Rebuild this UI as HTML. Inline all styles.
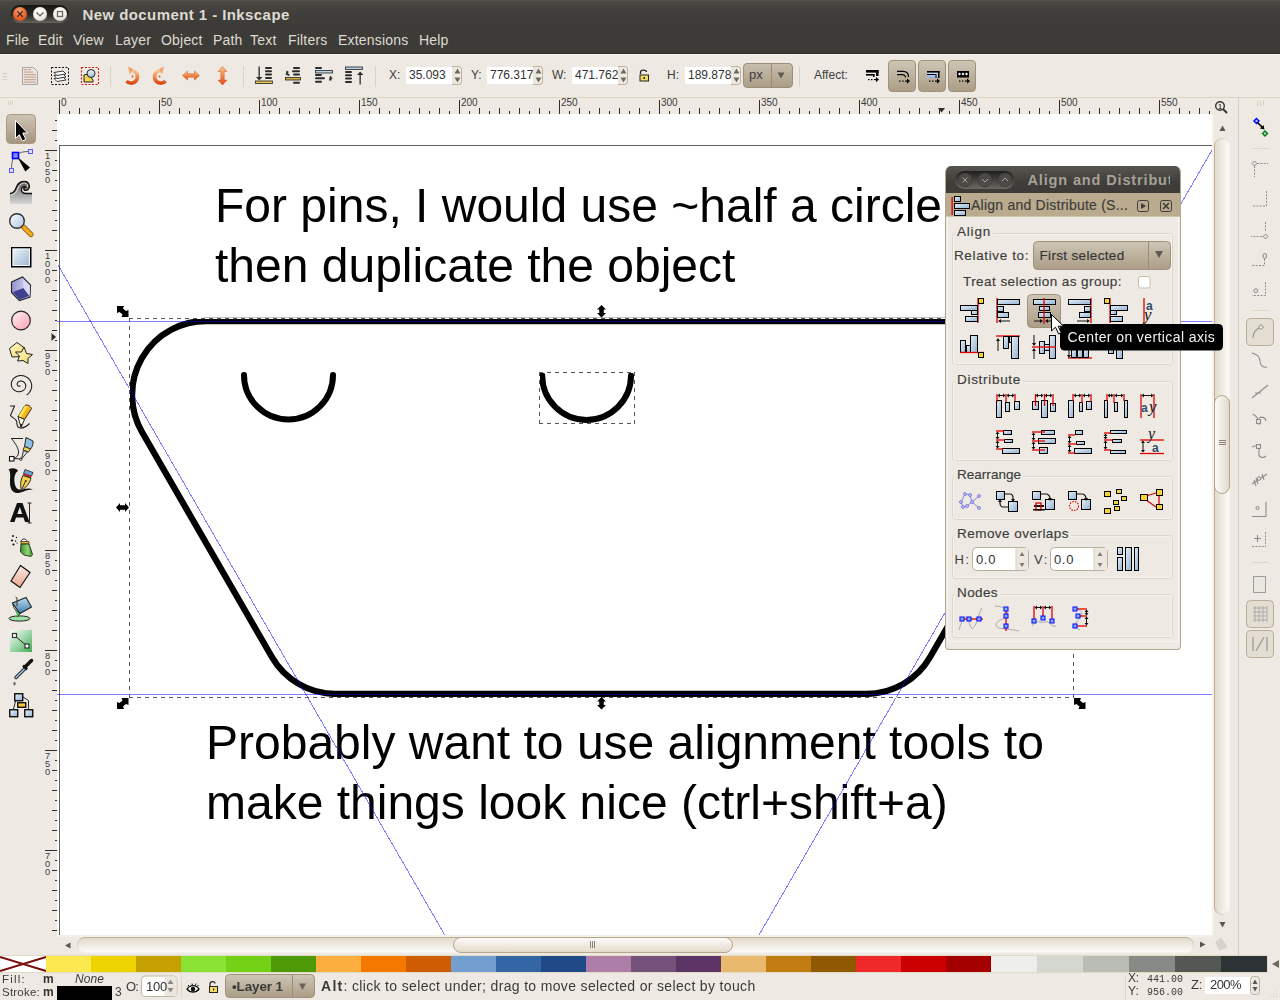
<!DOCTYPE html>
<html><head><meta charset="utf-8">
<style>
*{margin:0;padding:0;box-sizing:border-box}
html,body{width:1280px;height:1000px;overflow:hidden;background:#eeeae3;font-family:"Liberation Sans",sans-serif;position:relative}
.a{position:absolute}
svg{overflow:visible}
#title{left:0;top:0;width:1280px;height:27px;background:linear-gradient(#5e5950 0,#4a4843 1px,#3f3e3a 14px,#3c3b37 27px);}
#menu{left:0;top:27px;width:1280px;height:27px;background:#3c3b37;border-bottom:1px solid #2c2b28}
#menu span{position:absolute;top:5px;font-size:14px;color:#dfdbd2;letter-spacing:0.2px}
#tb{left:0;top:54px;width:1280px;height:43px;background:#eeeae3;border-top:1px solid #f8f6f2;}
.sep97{left:0;top:97px;width:1280px;height:1px;background:#ddd5c4}
#canvas{left:57px;top:114px;width:1155px;height:821px;background:#fff;overflow:hidden}
</style></head><body>
<div id="title" class="a"></div>
<div id="menu" class="a">
<span style="left:6px">File</span><span style="left:38px">Edit</span><span style="left:73px">View</span><span style="left:115px">Layer</span><span style="left:161px">Object</span><span style="left:213px">Path</span><span style="left:250px">Text</span><span style="left:288px">Filters</span><span style="left:338px">Extensions</span><span style="left:419px">Help</span>
</div>
<svg class="a" style="left:0;top:0" width="400" height="27" viewBox="0 0 400 27">
<defs>
<linearGradient id="tpill" x1="0" y1="0" x2="0" y2="1"><stop offset="0" stop-color="#161614"/><stop offset="0.55" stop-color="#2a2926"/><stop offset="1" stop-color="#67645d"/></linearGradient>
<radialGradient id="tred" cx="0.45" cy="0.3" r="0.7"><stop offset="0" stop-color="#f7a37a"/><stop offset="0.6" stop-color="#ec6a35"/><stop offset="1" stop-color="#d9531e"/></radialGradient>
<radialGradient id="twht" cx="0.45" cy="0.3" r="0.7"><stop offset="0" stop-color="#ffffff"/><stop offset="0.7" stop-color="#f0ede6"/><stop offset="1" stop-color="#d6d1c6"/></radialGradient>
</defs>
<rect x="10.5" y="5" width="58.5" height="18" rx="9" fill="url(#tpill)"/>
<circle cx="20" cy="14" r="7" fill="url(#tred)"/>
<circle cx="40" cy="14" r="7" fill="url(#twht)"/>
<circle cx="60" cy="14" r="7" fill="url(#twht)"/>
<path d="M17.3,11.3 L22.7,16.7 M22.7,11.3 L17.3,16.7" stroke="#4a2a1a" stroke-width="1.3"/>
<path d="M36.5,12.5 L40,15.8 L43.5,12.5" stroke="#6a6760" stroke-width="1.4" fill="none"/>
<rect x="57.5" y="11.5" width="5" height="5" fill="none" stroke="#6a6760" stroke-width="1.3"/>
<text x="82.5" y="19.5" font-family="Liberation Sans" font-weight="bold" font-size="15" fill="#dfdbd2" letter-spacing="0.42">New document 1 - Inkscape</text>
</svg>

<div id="tb" class="a"></div>
<style>
.tl{position:absolute;top:67px;font-size:12px;color:#3c3c3c;line-height:17px}
.inp{position:absolute;top:67px;height:17px;background:#fff;font-size:12px;color:#333;line-height:17px;padding-left:3px;overflow:hidden;white-space:nowrap}
.spin{position:absolute;top:66px;width:10px;height:19px;background:linear-gradient(90deg,#e9e4d9,#f3f0ea);border:1px solid #bfb39c;border-left:none;border-radius:0 4px 4px 0}
.btnp{position:absolute;top:60px;width:28px;height:32px;border-radius:4px;border:1px solid #a0927a;background:linear-gradient(#cfc6b6,#ab9d86)}
.vsep{position:absolute;top:66px;width:1px;height:21px;background:#dcd4c3}
</style>
<g></g>
<svg class="a" style="left:0;top:54px" width="1280" height="43" viewBox="0 54 1280 43">
<defs>
<linearGradient id="og" x1="0" y1="0" x2="0" y2="1"><stop offset="0" stop-color="#f7c89a"/><stop offset="0.5" stop-color="#f08a4b"/><stop offset="1" stop-color="#dc4a14"/></linearGradient>
<linearGradient id="bl" x1="0" y1="0" x2="0" y2="1"><stop offset="0" stop-color="#f3f7fb"/><stop offset="1" stop-color="#9bb8d5"/></linearGradient>
</defs>
<g fill="#d8cfbc"><rect x="3" y="73" width="4" height="1"/><rect x="3" y="76" width="4" height="1"/><rect x="3" y="79" width="4" height="1"/></g>
<!-- doc icon -->
<path d="M22.5,67.5 L33.5,67.5 L37.5,71.5 L37.5,84.5 L22.5,84.5 Z" fill="#ebe3de" stroke="#a7a7a7" stroke-width="1"/>
<g fill="#c9a795"><rect x="24" y="69" width="3" height="1.2"/><rect x="28" y="69" width="3" height="1.2"/><rect x="24" y="71.5" width="9" height="1.2"/><rect x="24" y="74" width="12" height="1.2"/><rect x="24" y="76.5" width="12" height="1.2"/><rect x="24" y="79" width="12" height="1.2"/><rect x="24" y="81.5" width="12" height="1.2"/></g>
<!-- layers dashed -->
<rect x="51.5" y="67.5" width="17" height="17" fill="none" stroke="#111" stroke-width="1" stroke-dasharray="2,1.5"/>
<g stroke="#222" stroke-width="0.9" fill="#fff"><path d="M54,78.5 L63,77 L66,80 L57,81.5 Z"/><path d="M54,75.5 L63,74 L66,77 L57,78.5 Z"/><path d="M54,72.5 L63,71 L66,74 L57,75.5 Z"/></g>
<!-- red dashed w/ magnifier -->
<rect x="81.5" y="67.5" width="17" height="17" fill="none" stroke="#e01b1b" stroke-width="1.2" stroke-dasharray="2,1.5"/>
<path d="M84,75 L88,74 L93,80 L93,82 L84,82 Z" fill="#f6d44c" stroke="#222" stroke-width="1"/>
<circle cx="91" cy="73.5" r="4" fill="url(#bl)" stroke="#222" stroke-width="1"/>
<rect x="110" y="66" width="1" height="21" fill="#dcd4c3"/>
<!-- undo -->
<g transform="translate(2,0)"><path d="M129,70.5 A6.3,6.3 0 1 1 124.5,81" fill="none" stroke="url(#og)" stroke-width="3.6"/>
<path d="M126,66.5 L131,69 L128,74.5 Z" fill="#f3a36a"/>
<circle cx="130.5" cy="76.5" r="1" fill="#e0541c"/></g>
<!-- redo -->
<g transform="translate(3,0)"><path d="M158,70.5 A6.3,6.3 0 1 0 162.5,81" fill="none" stroke="url(#og)" stroke-width="3.6"/>
<path d="M161,66.5 L156,69 L159,74.5 Z" fill="#f3a36a"/>
<circle cx="156.5" cy="76.5" r="1" fill="#e0541c"/></g>
<!-- flip h -->
<path d="M182.5,75.5 L187.5,71 L187.5,73.8 L194.5,73.8 L194.5,71 L199.5,75.5 L194.5,80 L194.5,77.2 L187.5,77.2 L187.5,80 Z" fill="url(#og)" stroke="#d5521b" stroke-width="0.5"/>
<!-- flip v -->
<path d="M222.5,66.5 L227,71.5 L224.2,71.5 L224.2,80 L227,80 L222.5,85 L218,80 L220.8,80 L220.8,71.5 L218,71.5 Z" fill="url(#og)" stroke="#d5521b" stroke-width="0.5"/>
<rect x="243" y="66" width="1" height="21" fill="#dcd4c3"/>
<!-- z-order icons -->
<g fill="#2b2b2b">
<rect x="258.5" y="66.5" width="1.3" height="12"/><path d="M256,77 L262.3,77 L259.2,80.5 Z"/>
<rect x="265" y="67" width="7" height="2" rx="1"/><rect x="265" y="70.3" width="7" height="2" rx="1"/><rect x="265" y="73.6" width="7" height="2" rx="1"/><rect x="265" y="77" width="7" height="2" rx="1"/>
</g>
<rect x="255.5" y="81" width="17" height="2.5" fill="#e6c34f" stroke="#222" stroke-width="0.8"/>
<g fill="#2b2b2b">
<rect x="293" y="67" width="7" height="2" rx="1"/><rect x="292" y="70.3" width="8" height="2" rx="1"/><rect x="293" y="73.6" width="7" height="2" rx="1"/><rect x="293" y="81.7" width="7" height="2" rx="1"/>
<path d="M286.5,70.5 L289,72 L287.5,73 L290,75 L288.5,76 L286,74.5 L285.5,75.5 Z"/>
</g>
<rect x="285.5" y="77.5" width="15" height="2.5" fill="#d2b040" stroke="#222" stroke-width="0.8"/>
<g fill="#2b2b2b">
<rect x="315" y="67" width="7" height="2" rx="1"/><rect x="315" y="74" width="7" height="2" rx="1"/><rect x="315" y="77.3" width="10" height="2" rx="1"/><rect x="315" y="80.7" width="7" height="2" rx="1"/>
<path d="M330,75.5 L333,78.5 L331.5,78.5 L331.5,80.5 L329,80.5 Z"/>
</g>
<rect x="315.5" y="70.5" width="17" height="2.5" fill="#b9cfe6" stroke="#222" stroke-width="0.8"/>
<g fill="#2b2b2b">
<rect x="345" y="71" width="7" height="2" rx="1"/><rect x="345" y="74.3" width="7" height="2" rx="1"/><rect x="345" y="77.6" width="7" height="2" rx="1"/><rect x="345" y="81" width="7" height="2" rx="1"/>
<rect x="359.5" y="73.5" width="1.3" height="11"/><path d="M357,75 L363.3,75 L360.2,71.5 Z"/>
</g>
<rect x="345.5" y="67" width="17" height="2.5" fill="#b9cfe6" stroke="#222" stroke-width="0.8"/>
<rect x="375" y="66" width="1" height="21" fill="#dcd4c3"/>
<!-- lock -->
<path d="M640.5,74 L640.5,72 C640.5,69.5 646.5,69.5 646.5,72" fill="none" stroke="#222" stroke-width="1.3"/>
<rect x="640" y="75" width="8.5" height="6" fill="#f5dc5c" stroke="#222" stroke-width="1"/>
<rect x="643.5" y="77" width="1.5" height="2" fill="#222"/>
<rect x="799" y="66" width="1" height="21" fill="#dcd4c3"/>
</svg>
<div class="tl" style="left:389px">X:</div>
<div class="inp" style="left:406px;width:47px">35.093</div><div class="spin" style="left:452px"></div>
<div class="tl" style="left:471px">Y:</div>
<div class="inp" style="left:487px;width:46px">776.317</div><div class="spin" style="left:533px"></div>
<div class="tl" style="left:552px">W:</div>
<div class="inp" style="left:572px;width:47px">471.762</div><div class="spin" style="left:618px"></div>
<div class="tl" style="left:667px">H:</div>
<div class="inp" style="left:685px;width:47px">189.878</div><div class="spin" style="left:731px"></div>
<div class="a" style="left:743px;top:63px;width:50px;height:25px;border-radius:4px;border:1px solid #9d8f77;background:linear-gradient(#c8bead,#ab9d86)"><div class="a" style="left:27px;top:0;width:1px;height:23px;background:#9a8c74"></div><div class="a" style="left:5px;top:3px;font-size:13px;color:#3c3c3c">px</div></div>
<div class="tl" style="left:814px">Affect:</div>
<div class="btnp" style="left:888px"></div><div class="btnp" style="left:918px"></div><div class="btnp" style="left:948px"></div>
<svg class="a" style="left:0;top:54px" width="1280" height="43" viewBox="0 54 1280 43">

<g fill="#6e6a62">
<path d="M454.5,73.5 L457.5,68.5 L460.5,73.5 Z M454.5,77.5 L457.5,82.5 L460.5,77.5 Z"/>
<path d="M535.5,73.5 L538.5,68.5 L541.5,73.5 Z M535.5,77.5 L538.5,82.5 L541.5,77.5 Z"/>
<path d="M620.5,73.5 L623.5,68.5 L626.5,73.5 Z M620.5,77.5 L623.5,82.5 L626.5,77.5 Z"/>
<path d="M733.5,73.5 L736.5,68.5 L739.5,73.5 Z M733.5,77.5 L736.5,82.5 L739.5,77.5 Z"/>
<path d="M777.5,72.5 L784.5,72.5 L781,78.5 Z" fill="#5f5a50"/>
</g>
<!-- affect icons -->
<g fill="#000">
<rect x="866" y="70" width="12.5" height="2.6"/><rect x="876" y="70" width="2.5" height="6"/>
<rect x="866" y="74" width="8.5" height="1.6"/><rect x="873" y="74" width="1.5" height="3"/>
<rect x="868" y="79" width="1.5" height="1.2"/><rect x="871" y="79" width="1.5" height="1.2"/><rect x="874" y="79" width="2" height="1.2"/><path d="M876,77 L879,79.6 L876,82.2 Z"/>
</g>
<g fill="none" stroke="#000" stroke-width="1.2"><path d="M897,71.3 L903,71.3 C906.5,71.3 908.5,73.5 908.5,77"/><path d="M897,74.6 L902,74.6 C904,74.6 905.5,75.5 905.5,77.5"/></g>
<g fill="#000"><rect x="899" y="80.5" width="1.5" height="1.2"/><rect x="902" y="80.5" width="1.5" height="1.2"/><rect x="905" y="80.5" width="2" height="1.2"/><path d="M907,78.5 L910,81.1 L907,83.7 Z"/></g>
<defs><linearGradient id="afb" x1="0" y1="0" x2="0" y2="1"><stop offset="0" stop-color="#dce9f6"/><stop offset="1" stop-color="#8fb3d9"/></linearGradient></defs>
<rect x="927" y="71" width="12" height="7" fill="url(#afb)"/>
<g fill="#000"><rect x="927" y="71" width="12.5" height="1.6"/><rect x="938" y="71" width="1.5" height="7"/><rect x="927" y="74" width="9" height="1"/><rect x="935.5" y="74" width="1" height="4"/></g>
<g fill="#000"><rect x="929" y="80.5" width="1.5" height="1.2"/><rect x="932" y="80.5" width="1.5" height="1.2"/><rect x="935" y="80.5" width="2" height="1.2"/><path d="M937,78.5 L940,81.1 L937,83.7 Z"/></g>
<rect x="957" y="71" width="12" height="6.5" fill="#000"/>
<g fill="#fff"><path d="M959.5,72.5 L961,74 L959.5,75.5 L958,74 Z"/><path d="M963,72.5 L964.5,74 L963,75.5 L961.5,74 Z"/><path d="M966.5,72.5 L968,74 L966.5,75.5 L965,74 Z"/></g>
<g fill="#000"><rect x="959" y="80.5" width="1.5" height="1.2"/><rect x="962" y="80.5" width="1.5" height="1.2"/><rect x="965" y="80.5" width="2" height="1.2"/><path d="M967,78.5 L970,81.1 L967,83.7 Z"/></g>
</svg>

<div class="a sep97"></div>
<svg class="a" style="left:0;top:0" width="1280" height="1000" viewBox="0 0 1280 1000"><g fill="#2e2e2e"><rect x="59" y="100" width="1" height="14"/><rect x="69" y="111" width="1" height="3"/><rect x="79" y="108" width="1" height="6"/><rect x="89" y="111" width="1" height="3"/><rect x="99" y="108" width="1" height="6"/><rect x="109" y="111" width="1" height="3"/><rect x="119" y="108" width="1" height="6"/><rect x="129" y="111" width="1" height="3"/><rect x="139" y="108" width="1" height="6"/><rect x="149" y="111" width="1" height="3"/><rect x="159" y="100" width="1" height="14"/><rect x="169" y="111" width="1" height="3"/><rect x="179" y="108" width="1" height="6"/><rect x="189" y="111" width="1" height="3"/><rect x="199" y="108" width="1" height="6"/><rect x="209" y="111" width="1" height="3"/><rect x="219" y="108" width="1" height="6"/><rect x="229" y="111" width="1" height="3"/><rect x="239" y="108" width="1" height="6"/><rect x="249" y="111" width="1" height="3"/><rect x="259" y="100" width="1" height="14"/><rect x="269" y="111" width="1" height="3"/><rect x="279" y="108" width="1" height="6"/><rect x="289" y="111" width="1" height="3"/><rect x="299" y="108" width="1" height="6"/><rect x="309" y="111" width="1" height="3"/><rect x="319" y="108" width="1" height="6"/><rect x="329" y="111" width="1" height="3"/><rect x="339" y="108" width="1" height="6"/><rect x="349" y="111" width="1" height="3"/><rect x="359" y="100" width="1" height="14"/><rect x="369" y="111" width="1" height="3"/><rect x="379" y="108" width="1" height="6"/><rect x="389" y="111" width="1" height="3"/><rect x="399" y="108" width="1" height="6"/><rect x="409" y="111" width="1" height="3"/><rect x="419" y="108" width="1" height="6"/><rect x="429" y="111" width="1" height="3"/><rect x="439" y="108" width="1" height="6"/><rect x="449" y="111" width="1" height="3"/><rect x="459" y="100" width="1" height="14"/><rect x="469" y="111" width="1" height="3"/><rect x="479" y="108" width="1" height="6"/><rect x="489" y="111" width="1" height="3"/><rect x="499" y="108" width="1" height="6"/><rect x="509" y="111" width="1" height="3"/><rect x="519" y="108" width="1" height="6"/><rect x="529" y="111" width="1" height="3"/><rect x="539" y="108" width="1" height="6"/><rect x="549" y="111" width="1" height="3"/><rect x="559" y="100" width="1" height="14"/><rect x="569" y="111" width="1" height="3"/><rect x="579" y="108" width="1" height="6"/><rect x="589" y="111" width="1" height="3"/><rect x="599" y="108" width="1" height="6"/><rect x="609" y="111" width="1" height="3"/><rect x="619" y="108" width="1" height="6"/><rect x="629" y="111" width="1" height="3"/><rect x="639" y="108" width="1" height="6"/><rect x="649" y="111" width="1" height="3"/><rect x="659" y="100" width="1" height="14"/><rect x="669" y="111" width="1" height="3"/><rect x="679" y="108" width="1" height="6"/><rect x="689" y="111" width="1" height="3"/><rect x="699" y="108" width="1" height="6"/><rect x="709" y="111" width="1" height="3"/><rect x="719" y="108" width="1" height="6"/><rect x="729" y="111" width="1" height="3"/><rect x="739" y="108" width="1" height="6"/><rect x="749" y="111" width="1" height="3"/><rect x="759" y="100" width="1" height="14"/><rect x="769" y="111" width="1" height="3"/><rect x="779" y="108" width="1" height="6"/><rect x="789" y="111" width="1" height="3"/><rect x="799" y="108" width="1" height="6"/><rect x="809" y="111" width="1" height="3"/><rect x="819" y="108" width="1" height="6"/><rect x="829" y="111" width="1" height="3"/><rect x="839" y="108" width="1" height="6"/><rect x="849" y="111" width="1" height="3"/><rect x="859" y="100" width="1" height="14"/><rect x="869" y="111" width="1" height="3"/><rect x="879" y="108" width="1" height="6"/><rect x="889" y="111" width="1" height="3"/><rect x="899" y="108" width="1" height="6"/><rect x="909" y="111" width="1" height="3"/><rect x="919" y="108" width="1" height="6"/><rect x="929" y="111" width="1" height="3"/><rect x="939" y="108" width="1" height="6"/><rect x="949" y="111" width="1" height="3"/><rect x="959" y="100" width="1" height="14"/><rect x="969" y="111" width="1" height="3"/><rect x="979" y="108" width="1" height="6"/><rect x="989" y="111" width="1" height="3"/><rect x="999" y="108" width="1" height="6"/><rect x="1009" y="111" width="1" height="3"/><rect x="1019" y="108" width="1" height="6"/><rect x="1029" y="111" width="1" height="3"/><rect x="1039" y="108" width="1" height="6"/><rect x="1049" y="111" width="1" height="3"/><rect x="1059" y="100" width="1" height="14"/><rect x="1069" y="111" width="1" height="3"/><rect x="1079" y="108" width="1" height="6"/><rect x="1089" y="111" width="1" height="3"/><rect x="1099" y="108" width="1" height="6"/><rect x="1109" y="111" width="1" height="3"/><rect x="1119" y="108" width="1" height="6"/><rect x="1129" y="111" width="1" height="3"/><rect x="1139" y="108" width="1" height="6"/><rect x="1149" y="111" width="1" height="3"/><rect x="1159" y="100" width="1" height="14"/><rect x="1169" y="111" width="1" height="3"/><rect x="1179" y="108" width="1" height="6"/><rect x="1189" y="111" width="1" height="3"/><rect x="1199" y="108" width="1" height="6"/><rect x="1209" y="111" width="1" height="3"/></g><g font-family="Liberation Sans" font-size="10" fill="#3a3a3a"><text x="61" y="106">0</text><text x="161" y="106">50</text><text x="261" y="106">100</text><text x="361" y="106">150</text><text x="461" y="106">200</text><text x="561" y="106">250</text><text x="661" y="106">300</text><text x="761" y="106">350</text><text x="861" y="106">400</text><text x="961" y="106">450</text><text x="1061" y="106">500</text><text x="1161" y="106">550</text></g><path d="M938,108 L945,108 L941.5,112.5 Z" fill="#2e2e2e"/></svg>
<svg class="a" style="left:0;top:0" width="1280" height="1000" viewBox="0 0 1280 1000"><g fill="#2e2e2e"><rect x="55" y="120" width="2" height="1"/><rect x="52" y="130" width="5" height="1"/><rect x="55" y="140" width="2" height="1"/><rect x="45" y="150" width="12" height="1"/><rect x="55" y="160" width="2" height="1"/><rect x="52" y="170" width="5" height="1"/><rect x="55" y="180" width="2" height="1"/><rect x="52" y="190" width="5" height="1"/><rect x="55" y="200" width="2" height="1"/><rect x="52" y="210" width="5" height="1"/><rect x="55" y="220" width="2" height="1"/><rect x="52" y="230" width="5" height="1"/><rect x="55" y="240" width="2" height="1"/><rect x="45" y="250" width="12" height="1"/><rect x="55" y="260" width="2" height="1"/><rect x="52" y="270" width="5" height="1"/><rect x="55" y="280" width="2" height="1"/><rect x="52" y="290" width="5" height="1"/><rect x="55" y="300" width="2" height="1"/><rect x="52" y="310" width="5" height="1"/><rect x="55" y="320" width="2" height="1"/><rect x="52" y="330" width="5" height="1"/><rect x="55" y="340" width="2" height="1"/><rect x="45" y="350" width="12" height="1"/><rect x="55" y="360" width="2" height="1"/><rect x="52" y="370" width="5" height="1"/><rect x="55" y="380" width="2" height="1"/><rect x="52" y="390" width="5" height="1"/><rect x="55" y="400" width="2" height="1"/><rect x="52" y="410" width="5" height="1"/><rect x="55" y="420" width="2" height="1"/><rect x="52" y="430" width="5" height="1"/><rect x="55" y="440" width="2" height="1"/><rect x="45" y="450" width="12" height="1"/><rect x="55" y="460" width="2" height="1"/><rect x="52" y="470" width="5" height="1"/><rect x="55" y="480" width="2" height="1"/><rect x="52" y="490" width="5" height="1"/><rect x="55" y="500" width="2" height="1"/><rect x="52" y="510" width="5" height="1"/><rect x="55" y="520" width="2" height="1"/><rect x="52" y="530" width="5" height="1"/><rect x="55" y="540" width="2" height="1"/><rect x="45" y="550" width="12" height="1"/><rect x="55" y="560" width="2" height="1"/><rect x="52" y="570" width="5" height="1"/><rect x="55" y="580" width="2" height="1"/><rect x="52" y="590" width="5" height="1"/><rect x="55" y="600" width="2" height="1"/><rect x="52" y="610" width="5" height="1"/><rect x="55" y="620" width="2" height="1"/><rect x="52" y="630" width="5" height="1"/><rect x="55" y="640" width="2" height="1"/><rect x="45" y="650" width="12" height="1"/><rect x="55" y="660" width="2" height="1"/><rect x="52" y="670" width="5" height="1"/><rect x="55" y="680" width="2" height="1"/><rect x="52" y="690" width="5" height="1"/><rect x="55" y="700" width="2" height="1"/><rect x="52" y="710" width="5" height="1"/><rect x="55" y="720" width="2" height="1"/><rect x="52" y="730" width="5" height="1"/><rect x="55" y="740" width="2" height="1"/><rect x="45" y="750" width="12" height="1"/><rect x="55" y="760" width="2" height="1"/><rect x="52" y="770" width="5" height="1"/><rect x="55" y="780" width="2" height="1"/><rect x="52" y="790" width="5" height="1"/><rect x="55" y="800" width="2" height="1"/><rect x="52" y="810" width="5" height="1"/><rect x="55" y="820" width="2" height="1"/><rect x="52" y="830" width="5" height="1"/><rect x="55" y="840" width="2" height="1"/><rect x="45" y="850" width="12" height="1"/><rect x="55" y="860" width="2" height="1"/><rect x="52" y="870" width="5" height="1"/><rect x="55" y="880" width="2" height="1"/><rect x="52" y="890" width="5" height="1"/><rect x="55" y="900" width="2" height="1"/><rect x="52" y="910" width="5" height="1"/><rect x="55" y="920" width="2" height="1"/><rect x="52" y="930" width="5" height="1"/></g><g font-family="Liberation Sans" font-size="9.3" fill="#3a3a3a"><text x="45" y="159">1</text><text x="45" y="167">0</text><text x="45" y="175">5</text><text x="45" y="183">0</text><text x="45" y="259">1</text><text x="45" y="267">0</text><text x="45" y="275">0</text><text x="45" y="283">0</text><text x="45" y="359">9</text><text x="45" y="367">5</text><text x="45" y="375">0</text><text x="45" y="459">9</text><text x="45" y="467">0</text><text x="45" y="475">0</text><text x="45" y="559">8</text><text x="45" y="567">5</text><text x="45" y="575">0</text><text x="45" y="659">8</text><text x="45" y="667">0</text><text x="45" y="675">0</text><text x="45" y="759">7</text><text x="45" y="767">5</text><text x="45" y="775">0</text><text x="45" y="859">7</text><text x="45" y="867">0</text><text x="45" y="875">0</text></g><path d="M51.5,333 L56,337 L51.5,341 Z" fill="#2e2e2e"/></svg>
<svg class="a" style="left:0;top:0" width="40" height="730" viewBox="0 0 40 730">
<defs>
<linearGradient id="selbg" x1="0" y1="0" x2="0" y2="1"><stop offset="0" stop-color="#cfc5b4"/><stop offset="1" stop-color="#a49580"/></linearGradient>
<linearGradient id="gray1" x1="0" y1="0" x2="0" y2="1"><stop offset="0" stop-color="#5e5e5e"/><stop offset="1" stop-color="#d8d8d8"/></linearGradient>
<linearGradient id="blue1" x1="0" y1="0" x2="1" y2="1"><stop offset="0" stop-color="#f4f7fb"/><stop offset="1" stop-color="#98b5d0"/></linearGradient>
<linearGradient id="lens" x1="0" y1="0" x2="1" y2="1"><stop offset="0" stop-color="#ffffff"/><stop offset="1" stop-color="#a9c3e0"/></linearGradient>
<linearGradient id="pink" x1="0" y1="0" x2="1" y2="1"><stop offset="0" stop-color="#fff5f6"/><stop offset="1" stop-color="#fb9fae"/></linearGradient>
<linearGradient id="yel" x1="0" y1="0" x2="1" y2="1"><stop offset="0" stop-color="#fffbd8"/><stop offset="1" stop-color="#f3d760"/></linearGradient>
<linearGradient id="purp" x1="0" y1="0" x2="1" y2="0"><stop offset="0" stop-color="#8e8ecc"/><stop offset="1" stop-color="#e4e4fa"/></linearGradient>
<linearGradient id="green1" x1="0" y1="0" x2="1" y2="1"><stop offset="0" stop-color="#ffffff"/><stop offset="1" stop-color="#3fae55"/></linearGradient>
<linearGradient id="grn2" x1="0" y1="0" x2="1" y2="0"><stop offset="0" stop-color="#3c8f2c"/><stop offset="0.6" stop-color="#8fd66b"/><stop offset="1" stop-color="#3f8f2f"/></linearGradient>
<linearGradient id="bucket" x1="0" y1="0" x2="0" y2="1"><stop offset="0" stop-color="#bde0ee"/><stop offset="1" stop-color="#3f79b0"/></linearGradient>
<linearGradient id="eras" x1="0" y1="0" x2="0" y2="1"><stop offset="0" stop-color="#fbefe9"/><stop offset="1" stop-color="#eca58c"/></linearGradient>
<linearGradient id="boxb" x1="0" y1="0" x2="1" y2="1"><stop offset="0" stop-color="#e8f0f8"/><stop offset="1" stop-color="#94b2d0"/></linearGradient>
</defs>
<!-- handle -->
<g fill="#d9d0bd"><rect x="8" y="101" width="1" height="4"/><rect x="10" y="101" width="1" height="4"/><rect x="12" y="101" width="1" height="4"/></g>
<!-- select -->
<rect x="6.5" y="114.5" width="29" height="29" rx="4" fill="url(#selbg)" stroke="#a8997f" stroke-width="1"/>
<path d="M15.5,120.5 L27.5,133 L22.8,133 L25.8,139.3 L22.3,141 L19.3,134.7 L15.5,138.3 Z" fill="#000" stroke="#fff" stroke-width="1" stroke-linejoin="round"/>
<!-- node -->
<path d="M11.5,168.5 C11.5,162 13,157 16,155 C19,152.5 23,151.5 29,151.5" fill="none" stroke="#555" stroke-width="0.9"/>
<rect x="12.5" y="152.5" width="6" height="6" fill="#8a8af0" stroke="#0000ff" stroke-width="1.6"/>
<rect x="28.5" y="149.5" width="4" height="4" fill="#ddddff" stroke="#5a5aff" stroke-width="1"/>
<rect x="9.5" y="168.5" width="4" height="4" fill="#ddddff" stroke="#5a5aff" stroke-width="1"/>
<path d="M17.5,157 L30,167.5 L25.3,171.5 Z" fill="#000"/>
<!-- tweak -->
<path d="M10,193.5 C14,193.5 15.5,190 16.5,187 C18,183 21,181.5 24.5,181.5 C28.5,181.5 30,185 29,188 C28,190.5 25,191 24,189.5 C23.5,188.5 24,187 25.5,187 C24.5,186 22,186.5 21.5,189 C21,191.5 23,193.5 26,193.5 L32,193.5 L32,204 L10,204 Z" fill="url(#gray1)"/>
<path d="M10,193.5 C14,193.5 15.5,190 16.5,187 C18,183 21,181.5 24.5,181.5 C28.5,181.5 30,185 29,188 C28,190.5 25,191 24,189.5 C23.5,188.5 24,187 25.5,187 C24.5,186 22,186.5 21.5,189 C21,191.5 23,193.5 26,193.5 L32,193.5" fill="none" stroke="#111" stroke-width="1.4"/>
<path d="M11,195 C15,195 17,191 18,188 C19.5,184.5 21.5,183 24.5,183 C27,183 28,185 27.5,187" fill="none" stroke="#fff" stroke-width="0.8"/>
<!-- zoom -->
<path d="M23.5,227 L31,234.5" stroke="#7a5200" stroke-width="5.2" stroke-linecap="round"/>
<path d="M23.5,227 L31,234.5" stroke="#f7a91a" stroke-width="3.6" stroke-linecap="round"/>
<circle cx="17" cy="221" r="7.3" fill="url(#lens)" stroke="#2e3436" stroke-width="1.4"/>
<!-- rect -->
<rect x="11.75" y="247.75" width="19" height="19" fill="url(#blue1)" stroke="#000" stroke-width="1.5"/>
<rect x="13" y="249" width="16.5" height="16.5" fill="none" stroke="#fff" stroke-width="0.8"/>
<!-- 3d box -->
<path d="M11.5,282 L22.5,277 L30.5,285 L30,297 L19.5,300.5 L11.5,292.5 Z" fill="url(#purp)" stroke="#222" stroke-width="1.1"/>
<path d="M13,292 L23.5,288 L29.5,296 L19.5,299.5 Z" fill="#3e3e8e"/>
<path d="M23.5,288 L23,278.5 L30,285.5 L29.5,296 Z" fill="#d8d8f6"/>
<!-- circle -->
<circle cx="21" cy="320.5" r="9.3" fill="url(#pink)" stroke="#222" stroke-width="1.2"/>
<!-- star -->
<path d="M9.5,348.5 L17,342.5 L24,347.5 L21.5,356.5 L12,357 Z" fill="url(#yel)" stroke="#222" stroke-width="1"/>
<path d="M24,347 L26.5,353.5 L32.5,354.5 L28,358.5 L28,363.5 L23,360.5 L17.5,361 L19.5,356 L15.5,352 L21.5,352 Z" fill="url(#yel)" stroke="#222" stroke-width="1"/>
<!-- spiral -->
<path d="M20.29,385.66 L20.27,385.71 L20.24,385.77 L20.21,385.83 L20.17,385.88 L20.13,385.93 L20.08,385.98 L20.03,386.03 L19.97,386.08 L19.91,386.12 L19.84,386.16 L19.76,386.20 L19.69,386.23 L19.61,386.25 L19.52,386.28 L19.43,386.29 L19.34,386.31 L19.24,386.31 L19.15,386.32 L19.05,386.31 L18.95,386.30 L18.84,386.28 L18.74,386.26 L18.64,386.23 L18.53,386.19 L18.43,386.15 L18.33,386.10 L18.23,386.04 L18.13,385.98 L18.03,385.91 L17.94,385.83 L17.85,385.74 L17.77,385.65 L17.68,385.56 L17.61,385.45 L17.54,385.35 L17.47,385.23 L17.41,385.11 L17.36,384.99 L17.32,384.86 L17.28,384.73 L17.25,384.59 L17.23,384.45 L17.21,384.30 L17.21,384.16 L17.21,384.01 L17.23,383.86 L17.25,383.70 L17.28,383.55 L17.33,383.40 L17.38,383.24 L17.44,383.09 L17.52,382.94 L17.60,382.79 L17.69,382.65 L17.79,382.50 L17.90,382.36 L18.03,382.23 L18.16,382.10 L18.30,381.97 L18.45,381.85 L18.61,381.74 L18.77,381.63 L18.95,381.54 L19.13,381.44 L19.32,381.36 L19.52,381.29 L19.72,381.23 L19.93,381.17 L20.15,381.13 L20.37,381.09 L20.59,381.07 L20.81,381.06 L21.04,381.06 L21.28,381.07 L21.51,381.09 L21.74,381.13 L21.98,381.18 L22.21,381.24 L22.44,381.31 L22.67,381.39 L22.90,381.49 L23.12,381.60 L23.34,381.72 L23.55,381.85 L23.76,382.00 L23.96,382.15 L24.15,382.32 L24.34,382.50 L24.52,382.69 L24.68,382.89 L24.84,383.10 L24.98,383.32 L25.12,383.55 L25.24,383.78 L25.35,384.03 L25.44,384.28 L25.53,384.54 L25.59,384.80 L25.65,385.07 L25.68,385.35 L25.71,385.62 L25.71,385.90 L25.70,386.19 L25.68,386.47 L25.63,386.76 L25.57,387.04 L25.50,387.33 L25.41,387.61 L25.30,387.89 L25.17,388.16 L25.03,388.43 L24.87,388.70 L24.69,388.96 L24.50,389.21 L24.30,389.46 L24.07,389.69 L23.84,389.92 L23.59,390.13 L23.32,390.34 L23.04,390.53 L22.75,390.71 L22.45,390.88 L22.13,391.03 L21.81,391.17 L21.47,391.30 L21.13,391.40 L20.78,391.49 L20.42,391.57 L20.06,391.63 L19.69,391.67 L19.31,391.69 L18.93,391.69 L18.55,391.68 L18.17,391.64 L17.79,391.59 L17.41,391.52 L17.03,391.43 L16.66,391.32 L16.29,391.19 L15.93,391.04 L15.57,390.88 L15.22,390.69 L14.87,390.49 L14.54,390.27 L14.22,390.03 L13.91,389.78 L13.62,389.50 L13.33,389.22 L13.07,388.92 L12.81,388.60 L12.58,388.27 L12.36,387.93 L12.16,387.57 L11.98,387.20 L11.82,386.83 L11.69,386.44 L11.57,386.05 L11.47,385.64 L11.40,385.23 L11.35,384.82 L11.32,384.40 L11.32,383.98 L11.34,383.56 L11.38,383.13 L11.45,382.71 L11.54,382.29 L11.65,381.87 L11.80,381.45 L11.96,381.04 L12.15,380.64 L12.36,380.24 L12.59,379.85 L12.85,379.47 L13.13,379.11 L13.43,378.75 L13.76,378.41 L14.10,378.08 L14.46,377.77 L14.85,377.48 L15.25,377.20 L15.66,376.94 L16.10,376.70 L16.55,376.48 L17.01,376.28 L17.48,376.11 L17.97,375.95 L18.47,375.82 L18.97,375.72 L19.49,375.63 L20.01,375.58 L20.53,375.54 L21.06,375.54 L21.60,375.55 L22.13,375.60 L22.66,375.67 L23.19,375.76 L23.71,375.89 L24.24,376.04 L24.75,376.21 L25.26,376.41 L25.75,376.63 L26.24,376.88 L26.71,377.16 L27.17,377.46 L27.61,377.78 L28.04,378.12 L28.45,378.49 L28.84,378.88 L29.21,379.28 L29.55,379.71 L29.88,380.15 L30.18,380.61 L30.46,381.09 L30.71,381.58 L30.93,382.09 L31.12,382.61 L31.29,383.14 L31.43,383.68 L31.53,384.22 L31.61,384.78 L31.66,385.34 L31.67,385.90 L31.66,386.46 L31.61,387.03 L31.53,387.60 L31.41,388.16 L31.27,388.72 L31.09,389.27 L30.89,389.82 L30.65,390.36 L30.38,390.88 L30.08,391.40 L29.75,391.90 L29.39,392.39 L29.00,392.87 L28.59,393.32 L28.15,393.76 L27.68,394.17 L27.19,394.57 L26.68,394.94" fill="none" stroke="#222" stroke-width="1.1"/>
<!-- pencil -->
<path d="M10,406 L14.5,406 L10.5,415.5 C12,418 15.5,418 16.5,421 C17.5,424 16,427.5 20,428 C24,428.5 27,426 29.5,423.5" fill="none" stroke="#222" stroke-width="1.1"/>
<path d="M25,405.5 C27,404 30.5,406 31.5,408.5 L24.5,419.5 L18,416.5 Z" fill="#f8b418" stroke="#222" stroke-width="1"/>
<path d="M25,405.5 L18,416.5 L20.5,418 L27.5,406.5 Z" fill="#ffe45a"/>
<path d="M18,416.5 L24.5,419.5 L21,427.5 Z" fill="#fff8e0" stroke="#222" stroke-width="1"/>
<path d="M20.2,423.5 L22.3,424.5 L21,427.5 Z" fill="#111"/>
<!-- pen -->
<path d="M11,438.5 L23,438.5 M11.5,438.5 C15,443 18.5,448 18.5,452 C18.5,455.5 17,457.5 13.5,458.5 M14,458.5 L20,459" fill="none" stroke="#222" stroke-width="1"/>
<rect x="9.5" y="456.5" width="4.5" height="4.5" fill="#fff" stroke="#111" stroke-width="1.1"/>
<circle cx="20.8" cy="459.2" r="1.2" fill="#fff" stroke="#111" stroke-width="0.9"/>
<path d="M26,437.5 L33,441 C33.5,444 32,447.5 30.5,449 L24.5,446.5 Z" fill="#8fc0e0" stroke="#222" stroke-width="1"/>
<path d="M24.5,446.5 L30.5,449 L28.5,452 L23,450 Z" fill="#f4d25a" stroke="#222" stroke-width="0.9"/>
<path d="M23.5,450.5 L27.5,452 L21.5,459 Z" fill="#ddd" stroke="#222" stroke-width="0.9"/>
<!-- calligraphy -->
<path d="M8.5,469.5 C12,467.5 17,468 18,471 C15,473 14,477 14.5,482 C15,487 17,489.5 20,489.5 C24,489.5 28,487 33,489.5 C27,489 23,492.5 18,493 C12,493.5 10,488 10,482 C10,477 11,472 8.5,469.5 Z" fill="#111"/>
<path d="M25,469.5 L33,472.5 L31.5,476 L23.5,473.5 Z" fill="#6aa3d4" stroke="#222" stroke-width="0.8"/>
<path d="M23.5,473.5 L31.5,476 L31,478 L23,475.5 Z" fill="#d42020"/>
<path d="M23,475.5 L31,478 C30,482 28,486 21.5,490.5 C20,485 20.5,480 23,475.5 Z" fill="#f5d04a" stroke="#222" stroke-width="1"/>
<path d="M25.5,481 L22,489" stroke="#222" stroke-width="0.9"/>
<circle cx="25.8" cy="481" r="0.9" fill="#222"/>
<!-- text -->
<path d="M10,522 L17,503 L22.5,503 L29.5,522 L25,522 L23.5,517.5 L16,517.5 L14.5,522 Z M17.3,514 L22.2,514 L19.8,507 Z" fill="#111"/>
<path d="M27.5,503 L31.5,503 M29.5,503 L29.5,523 M27.5,523 L31.5,523" stroke="#111" stroke-width="0.9" fill="none"/>
<!-- spray -->
<g fill="#111"><circle cx="13" cy="536" r="1"/><circle cx="12" cy="540.5" r="1.1"/><circle cx="13.5" cy="544.5" r="1.1"/><circle cx="16.5" cy="537.5" r="0.7"/><circle cx="15.5" cy="541" r="0.7"/><circle cx="17" cy="543" r="0.6"/></g>
<path d="M21,542 C21,538 27,538 27,542 Z" fill="#fff" stroke="#222" stroke-width="0.9"/>
<rect x="21" y="541.5" width="8" height="2.5" fill="#f2b52d" stroke="#222" stroke-width="0.6"/>
<path d="M21,544 L29,544 L32.5,554.5 L31,556.5 L24,555 L20.5,552 Z" fill="url(#grn2)" stroke="#222" stroke-width="0.9"/>
<!-- eraser -->
<path d="M20.5,565.5 L30,572.5 L20,587.5 L11,581 Z" fill="url(#eras)" stroke="#111" stroke-width="1.2"/>
<!-- bucket -->
<ellipse cx="19.5" cy="618.5" rx="10.5" ry="2.6" fill="#9fe0a5" stroke="#222" stroke-width="1"/>
<path d="M12.5,603 L26,597.5 L31.5,607 L20,613.5 Z" fill="url(#bucket)" stroke="#222" stroke-width="1.1"/>
<path d="M12.5,603 C13,607 15.5,611 20,613.5 L17.5,617" fill="#55c06a" stroke="#222" stroke-width="0.9"/>
<path d="M17,606 L17,598 L15.5,597" fill="none" stroke="#333" stroke-width="1"/>
<!-- gradient -->
<rect x="10" y="630" width="22" height="22" fill="url(#green1)"/>
<path d="M14.5,635.5 L27,646" stroke="#222" stroke-width="1"/>
<rect x="12.5" y="633.5" width="4" height="4" fill="#fff" stroke="#333" stroke-width="1.2"/>
<rect x="25" y="644" width="4" height="4" fill="#fff" stroke="#333" stroke-width="1.2"/>
<!-- dropper -->
<path d="M16,677.5 L25.5,668" stroke="#222" stroke-width="3.4" stroke-linecap="round"/>
<path d="M16,677.5 L25.5,668" stroke="#9ec2e4" stroke-width="1.6" stroke-linecap="round"/>
<path d="M23.5,666 L30,659.5 C32,657.5 34.5,660 32.5,662 L26,668.5 Z" fill="#111"/>
<path d="M23,665.5 L27,669.5" stroke="#111" stroke-width="2.5"/>
<path d="M14.5,682 C13.5,683.5 13.5,685 14.5,685 C15.5,685 15.5,683.5 14.5,682 Z" fill="#8fb8e0" stroke="#333" stroke-width="0.7"/>
<!-- connector -->
<path d="M23,697 L28.5,700.5 L28.5,709.5 M15.5,701 L13.5,709" fill="none" stroke="#111" stroke-width="0.9"/>
<rect x="14.75" y="693.75" width="8" height="7" fill="url(#boxb)" stroke="#000" stroke-width="1.3"/>
<rect x="17.75" y="702.75" width="8" height="4.5" fill="#f8c93a" stroke="#000" stroke-width="1.3"/>
<rect x="9.75" y="709.75" width="8" height="7" fill="url(#boxb)" stroke="#000" stroke-width="1.3"/>
<rect x="24.75" y="709.75" width="8" height="7" fill="url(#boxb)" stroke="#000" stroke-width="1.3"/>
</svg>

<div id="canvas" class="a">
<svg width="1155" height="821" viewBox="57 114 1155 821" style="position:absolute;left:0;top:0">
<rect x="59.5" y="145.5" width="1300" height="1000" fill="none" stroke="#616161" stroke-width="1"/>
<g font-family="Liberation Sans" font-size="48" fill="#000" style="will-change:transform;opacity:0.999">
<text x="215" y="222">For pins, I would use ~half a circle</text>
<text x="215" y="282">then duplicate the object</text>
<text x="206" y="759">Probably want to use alignment tools to</text>
<text x="206" y="819">make things look nice (ctrl+shift+a)</text>
</g>
<path d="M206,321 L996,321 A74,74 0 0 1 1060,432 L930.4,656.5 A74,74 0 0 1 866.3,694 L335.7,694 A74,74 0 0 1 271.6,656.5 L142,432 A74,74 0 0 1 206,321 Z" fill="none" stroke="#000" stroke-width="6.3"/>
<path d="M244,375 A44.5,44.5 0 0 0 333,375" fill="none" stroke="#000" stroke-width="6" stroke-linecap="round"/>
<path d="M542.2,375.5 A44.4,44.4 0 0 0 631,375.5" fill="none" stroke="#000" stroke-width="6" stroke-linecap="round"/>
<g stroke="rgba(0,0,255,0.5)" stroke-width="1" fill="none" shape-rendering="crispEdges">
<line x1="57" y1="321.5" x2="1212" y2="321.5"/>
<line x1="57" y1="694.5" x2="1212" y2="694.5"/>
<line x1="58" y1="265" x2="444.8" y2="935"/>
<line x1="1212" y1="150" x2="759" y2="935"/>
</g>
<g fill="none" stroke-width="1" shape-rendering="crispEdges"><line x1="129" y1="318.5" x2="1074" y2="318.5" stroke="#fff"/><line x1="129" y1="318.5" x2="1074" y2="318.5" stroke="#575757" stroke-dasharray="4,4"/><line x1="129.5" y1="318" x2="129.5" y2="698" stroke="#fff"/><line x1="129.5" y1="318" x2="129.5" y2="698" stroke="#575757" stroke-dasharray="4,4"/><line x1="129" y1="697.5" x2="1074" y2="697.5" stroke="#fff"/><line x1="129" y1="697.5" x2="1074" y2="697.5" stroke="#575757" stroke-dasharray="4,4"/><line x1="1073.5" y1="318" x2="1073.5" y2="698" stroke="#fff"/><line x1="1073.5" y1="318" x2="1073.5" y2="698" stroke="#575757" stroke-dasharray="4,4"/><line x1="539" y1="372.5" x2="635" y2="372.5" stroke="#fff"/><line x1="539" y1="372.5" x2="635" y2="372.5" stroke="#575757" stroke-dasharray="4,4"/><line x1="539.5" y1="372" x2="539.5" y2="424" stroke="#fff"/><line x1="539.5" y1="372" x2="539.5" y2="424" stroke="#575757" stroke-dasharray="4,4"/><line x1="539" y1="423.5" x2="635" y2="423.5" stroke="#fff"/><line x1="539" y1="423.5" x2="635" y2="423.5" stroke="#575757" stroke-dasharray="4,4"/><line x1="634.5" y1="372" x2="634.5" y2="424" stroke="#fff"/><line x1="634.5" y1="372" x2="634.5" y2="424" stroke="#575757" stroke-dasharray="4,4"/></g>
<g fill="#000">
<path d="M117,306 L124,306 L123,308.5 L126,311 L128.5,310 L128.5,317 L121.5,317 L122.5,314.5 L119.5,312 L117,313 Z"/>
<path d="M117,306 L124,306 L123,308.5 L126,311 L128.5,310 L128.5,317 L121.5,317 L122.5,314.5 L119.5,312 L117,313 Z" transform="translate(0,1015) scale(1,-1)"/>
<path d="M117,306 L124,306 L123,308.5 L126,311 L128.5,310 L128.5,317 L121.5,317 L122.5,314.5 L119.5,312 L117,313 Z" transform="translate(957,392)"/>
<path d="M116,507.5 L120,503 L120,505.2 L125,505.2 L125,503 L129,507.5 L125,512 L125,509.8 L120,509.8 L120,512 Z"/>
<path d="M601.5,305 L606,309.5 L603.8,309.5 L603.8,313 L606,313 L601.5,317.5 L597,313 L599.2,313 L599.2,309.5 L597,309.5 Z"/>
<path d="M601.5,305 L606,309.5 L603.8,309.5 L603.8,313 L606,313 L601.5,317.5 L597,313 L599.2,313 L599.2,309.5 L597,309.5 Z" transform="translate(0,392)"/>
</g>
</svg>

</div>

<svg class="a" style="left:1239px;top:97px" width="41" height="858" viewBox="1239 97 41 858">
<g fill="#d9d0bd"><rect x="1257" y="101" width="1" height="5"/><rect x="1260" y="101" width="1" height="5"/><rect x="1263" y="101" width="1" height="5"/></g>
<!-- snap master -->
<path d="M1254,121 L1256.5,118.5 L1259,121 L1256.5,123.5 Z" fill="#c0c0ff" stroke="#0000ff" stroke-width="1.4"/>
<path d="M1257.5,122.5 L1263,128" stroke="#000" stroke-width="1.6"/><path d="M1264.5,129.5 L1260,128.5 L1263.5,125 Z" fill="#000"/>
<path d="M1262.5,133.5 L1265,131 L1267.5,133.5 L1265,136 Z" fill="#c0c0ff" stroke="#008000" stroke-width="1.4"/>
<g fill="#e0d6c2"><rect x="1252" y="148" width="17" height="1"/><rect x="1252" y="310" width="17" height="1"/><rect x="1252" y="562" width="17" height="1"/></g>
<g stroke="#8d8d8d" stroke-width="1" fill="none" stroke-dasharray="2,1.3">
<path d="M1257,163.5 L1268,163.5 M1254.5,166 L1254.5,177"/>
<path d="M1266.5,191 L1266.5,206 L1252,206"/>
<path d="M1265.5,222 L1265.5,232 M1262,236.5 L1251,236.5"/>
<path d="M1264.5,259 L1264.5,265.5 L1251,265.5"/>
<path d="M1265.5,282 L1265.5,295.5 L1252,295.5"/>
<path d="M1252,546.5 L1266,546.5 M1265.5,532 L1265.5,546"/>
</g>
<g stroke="#8d8d8d" stroke-width="1" fill="#e6e2da">
<path d="M1252,163.5 L1254.5,161 L1257,163.5 L1254.5,166 Z"/>
<path d="M1263,236.5 L1265.5,234 L1268,236.5 L1265.5,239 Z"/>
<ellipse cx="1264.8" cy="256" rx="1.8" ry="2.6"/>
<circle cx="1255.8" cy="290.7" r="2"/>
</g>
<!-- pressed button -->
<rect x="1246.5" y="318.5" width="27" height="27" rx="4" fill="#e3ddd2" stroke="#b9ad98"/>
<path d="M1253,338 C1253,333 1256,329 1261,327" fill="none" stroke="#8d8d8d" stroke-width="1.1"/>
<path d="M1258.5,327 L1261,324.5 L1263.5,327 L1261,329.5 Z" fill="#e6e2da" stroke="#8d8d8d"/>
<g stroke="#8d8d8d" stroke-width="1.1" fill="none">
<path d="M1252,353 C1256,354 1260,356 1260,361 C1260,366 1264,368 1267,367"/>
<path d="M1252,398 L1268,385 M1255,393 L1261,393"/>
<path d="M1253,414 C1256,416 1260,419 1259,425 M1259,418 C1262,416 1266,418 1266,421"/>
<path d="M1252,447 C1256,445 1260,446 1259,452 C1258,457 1262,459 1266,456"/>
<path d="M1252,484 L1267,474 M1254,480 L1256,486 M1256,478 L1258,484 M1262,474 L1264,480"/>
<path d="M1252,516.5 L1266,516.5 L1266,502"/>
</g>
<g fill="#e6e2da" stroke="#8d8d8d">
<rect x="1256.5" y="419.5" width="4" height="4"/>
<rect x="1256.5" y="444.5" width="4" height="4"/>
<circle cx="1259" cy="478.5" r="1.8"/>
<circle cx="1257.5" cy="508" r="1.6"/>
</g>
<path d="M1254,538.5 L1261,538.5 M1257.5,535 L1257.5,542" stroke="#8d8d8d" stroke-width="1.1"/>
<!-- page -->
<rect x="1253.5" y="576.5" width="12" height="16" fill="#eae7e1" stroke="#9d9d9d"/>
<!-- pressed grid -->
<rect x="1246.5" y="600.5" width="27" height="27" rx="4" fill="#e3ddd2" stroke="#b9ad98"/>
<g stroke="#a8a8a8" stroke-width="0.9"><path d="M1253,608 L1267,608 M1253,612 L1267,612 M1253,616 L1267,616 M1253,620 L1267,620 M1255,606 L1255,622 M1259,606 L1259,622 M1263,606 L1263,622 M1267,606 L1267,622"/></g>
<rect x="1246.5" y="630.5" width="27" height="27" rx="4" fill="#e3ddd2" stroke="#b9ad98"/>
<g stroke="#9a9a9a" stroke-width="1.3"><path d="M1253,637 L1253,651 M1267,637 L1267,651 M1256,651 L1264,637"/></g>
</svg>

<div class="a" style="left:945px;top:166px;width:236px;height:484px;border-radius:6px 6px 4px 4px;background:#eeeae3;border:1px solid #b3a68e;border-top:none;overflow:hidden">
<div class="a" style="left:-1px;top:0;width:236px;height:27px;background:linear-gradient(#57554f,#3f3e3a 60%,#3c3b37)"></div>
<div class="a" style="left:0;top:27px;width:234px;height:24px;background:#baab8e;border-bottom:1px solid #cfc4ae"></div>
<div class="a" style="left:1px;top:51px;width:232px;height:425px;border:1px solid #f7f5f1;border-top:none"></div>
</div>
<svg class="a" style="left:0;top:0" width="1280" height="1000" viewBox="0 0 1280 1000">
<defs>
<linearGradient id="bx" x1="0" y1="0" x2="1" y2="1"><stop offset="0" stop-color="#e6eff8"/><stop offset="1" stop-color="#93b2d1"/></linearGradient>
<linearGradient id="pill" x1="0" y1="0" x2="0" y2="1"><stop offset="0" stop-color="#1e1e1c"/><stop offset="1" stop-color="#6a6862"/></linearGradient>
<linearGradient id="btng" x1="0" y1="0" x2="0" y2="1"><stop offset="0" stop-color="#cfc6b6"/><stop offset="1" stop-color="#ab9d86"/></linearGradient>
<clipPath id="dlgclip"><rect x="945" y="166" width="225" height="30"/></clipPath>
</defs>
<rect x="955" y="171" width="59.5" height="18" rx="9" fill="url(#pill)"/>
<circle cx="965" cy="180" r="7" fill="#4b4a46" stroke="#3a3935" stroke-width="0.6"/>
<circle cx="985" cy="180" r="7" fill="#4b4a46" stroke="#3a3935" stroke-width="0.6"/>
<circle cx="1005" cy="180" r="7" fill="#4b4a46" stroke="#3a3935" stroke-width="0.6"/>
<path d="M962.5,177.5 L967.5,182.5 M967.5,177.5 L962.5,182.5" stroke="#a9a59c" stroke-width="1"/>
<path d="M982,179 L985,182 L988,179" stroke="#a9a59c" stroke-width="1" fill="none"/>
<path d="M1002,181 L1005,178 L1008,181" stroke="#a9a59c" stroke-width="1" fill="none"/>
<g clip-path="url(#dlgclip)" font-family="Liberation Sans"><text x="1027.5" y="185" font-size="14.5" fill="#a7a298" letter-spacing="0.859" font-weight="bold" >Align and Distribut</text></g>
<rect x="951.5" y="197" width="1.3" height="18" fill="#d40000"/>
<rect x="954.5" y="196.5" width="6" height="5" fill="url(#bx)" stroke="#000" stroke-width="1"/>
<rect x="954.5" y="203.5" width="15" height="5" fill="url(#bx)" stroke="#000" stroke-width="1"/>
<rect x="954.5" y="210.5" width="11" height="5" fill="url(#bx)" stroke="#000" stroke-width="1"/>
<g font-family="Liberation Sans"><text x="971" y="210" font-size="14" fill="#3a3a3a" letter-spacing="0.233" stroke="#3a3a3a" stroke-width="0.15">Align and Distribute (S...</text></g>
<rect x="1137.5" y="200.5" width="11" height="11" rx="2" fill="none" stroke="#3c3c3c" stroke-width="1"/><path d="M1141,203 L1146,206 L1141,209 Z" fill="#3c3c3c"/>
<rect x="1160.5" y="200.5" width="11" height="11" rx="2" fill="none" stroke="#3c3c3c" stroke-width="1"/><path d="M1163,203 L1169,209 M1169,203 L1163,209" stroke="#3c3c3c" stroke-width="1.6"/>
<rect x="952.5" y="233.5" width="220" height="131.0" rx="3" fill="none" stroke="#ddd6c8" stroke-width="1"/>
<rect x="953.5" y="234.5" width="218" height="129.0" rx="2" fill="none" stroke="#f6f4f0" stroke-width="1"/>
<rect x="952.5" y="381.5" width="220" height="79.0" rx="3" fill="none" stroke="#ddd6c8" stroke-width="1"/>
<rect x="953.5" y="382.5" width="218" height="77.0" rx="2" fill="none" stroke="#f6f4f0" stroke-width="1"/>
<rect x="952.5" y="476.5" width="220" height="43.0" rx="3" fill="none" stroke="#ddd6c8" stroke-width="1"/>
<rect x="953.5" y="477.5" width="218" height="41.0" rx="2" fill="none" stroke="#f6f4f0" stroke-width="1"/>
<rect x="952.5" y="535.5" width="220" height="43.0" rx="3" fill="none" stroke="#ddd6c8" stroke-width="1"/>
<rect x="953.5" y="536.5" width="218" height="41.0" rx="2" fill="none" stroke="#f6f4f0" stroke-width="1"/>
<rect x="952.5" y="594.5" width="220" height="43.0" rx="3" fill="none" stroke="#ddd6c8" stroke-width="1"/>
<rect x="953.5" y="595.5" width="218" height="41.0" rx="2" fill="none" stroke="#f6f4f0" stroke-width="1"/>
<g font-family="Liberation Sans">
<rect x="955" y="223.5" width="38" height="15" fill="#eeeae3"/>
<text x="957" y="235.5" font-size="13.5" fill="#3c3c3c" letter-spacing="0.796" stroke="#3c3c3c" stroke-width="0.15">Align</text>
<rect x="955" y="371.5" width="68" height="15" fill="#eeeae3"/>
<text x="957" y="383.5" font-size="13.5" fill="#3c3c3c" letter-spacing="0.698" stroke="#3c3c3c" stroke-width="0.15">Distribute</text>
<rect x="955" y="467" width="68" height="15" fill="#eeeae3"/>
<text x="957" y="479" font-size="13.5" fill="#3c3c3c" letter-spacing="0.024" stroke="#3c3c3c" stroke-width="0.15">Rearrange</text>
<rect x="955" y="526" width="116" height="15" fill="#eeeae3"/>
<text x="957" y="538" font-size="13.5" fill="#3c3c3c" letter-spacing="0.464" stroke="#3c3c3c" stroke-width="0.15">Remove overlaps</text>
<rect x="955" y="585" width="45" height="15" fill="#eeeae3"/>
<text x="957" y="597" font-size="13.5" fill="#3c3c3c" letter-spacing="0.396" stroke="#3c3c3c" stroke-width="0.15">Nodes</text>
<text x="954" y="259.5" font-size="13.5" fill="#3c3c3c" letter-spacing="0.623" stroke="#3c3c3c" stroke-width="0.15">Relative to:</text>
<text x="963" y="285.5" font-size="13.5" fill="#3c3c3c" letter-spacing="0.437" stroke="#3c3c3c" stroke-width="0.15">Treat selection as group:</text>
</g>
<rect x="1033.5" y="241.5" width="137" height="28" rx="4" fill="url(#btng)" stroke="#a0927a"/>
<rect x="1148" y="242" width="1" height="27" fill="#9a8c74"/>
<path d="M1155,251 L1163,251 L1159,258 Z" fill="#5f5a50"/>
<g font-family="Liberation Sans"><text x="1039.5" y="259.5" font-size="13.5" fill="#333" letter-spacing="0.338" stroke="#333" stroke-width="0.15">First selected</text></g>
<rect x="1138.5" y="276.5" width="11.5" height="11.5" rx="2" fill="#fff" stroke="#c7bca7"/>
<rect x="1027.5" y="294.5" width="33" height="33" rx="4" fill="url(#btng)" stroke="#a0927a"/>
<g transform="translate(960,298)">
<line x1="18" y1="0" x2="18" y2="25" stroke="#e00000" stroke-width="1.3"/>
<rect x="0.5" y="7.5" width="17" height="5" fill="url(#bx)" stroke="#000" stroke-width="1"/>
<rect x="11.5" y="12.5" width="6" height="4" fill="url(#bx)" stroke="#000" stroke-width="1"/>
<rect x="5.5" y="18.5" width="12" height="5" fill="url(#bx)" stroke="#000" stroke-width="1"/>
<rect x="18.5" y="0.5" width="5" height="5" fill="#f6d23a" stroke="#000" stroke-width="1"/>
</g>
<g transform="translate(996,298)">
<line x1="1" y1="0" x2="1" y2="25" stroke="#e00000" stroke-width="1.3"/>
<rect x="1.5" y="1.5" width="22" height="5" fill="url(#bx)" stroke="#000" stroke-width="1"/>
<rect x="1.5" y="8.5" width="6" height="5" fill="url(#bx)" stroke="#000" stroke-width="1"/>
<rect x="1.5" y="14.5" width="11" height="5" fill="url(#bx)" stroke="#000" stroke-width="1"/>
<path d="M4,23 L14,23" stroke="#111" stroke-width="1" fill="none"/>
<path d="M2,23 L5,21 L5,25 Z" fill="#111"/>
</g>
<g transform="translate(1032,298)">
<rect x="1.5" y="1.5" width="22" height="5" fill="url(#bx)" stroke="#000" stroke-width="1"/>
<rect x="7.5" y="8.5" width="10" height="4" fill="url(#bx)" stroke="#000" stroke-width="1"/>
<rect x="6.5" y="14.5" width="12" height="5" fill="url(#bx)" stroke="#000" stroke-width="1"/>
<line x1="12" y1="0" x2="12" y2="26" stroke="#e00000" stroke-width="1.3"/>
<path d="M2,23 L10,23 M14,23 L22,23" stroke="#111" stroke-width="1" fill="none"/>
<path d="M11,23 L8,21 L8,25 Z M13,23 L16,21 L16,25 Z" fill="#111"/>
</g>
<g transform="translate(1068,298)">
<line x1="23" y1="0" x2="23" y2="25" stroke="#e00000" stroke-width="1.3"/>
<rect x="0.5" y="1.5" width="22" height="5" fill="url(#bx)" stroke="#000" stroke-width="1"/>
<rect x="16.5" y="8.5" width="6" height="5" fill="url(#bx)" stroke="#000" stroke-width="1"/>
<rect x="11.5" y="14.5" width="11" height="5" fill="url(#bx)" stroke="#000" stroke-width="1"/>
<path d="M9,23 L20,23" stroke="#111" stroke-width="1" fill="none"/>
<path d="M22,23 L19,21 L19,25 Z" fill="#111"/>
</g>
<g transform="translate(1104,298)">
<line x1="6" y1="0" x2="6" y2="25" stroke="#e00000" stroke-width="1.3"/>
<rect x="6.5" y="7.5" width="17" height="5" fill="url(#bx)" stroke="#000" stroke-width="1"/>
<rect x="6.5" y="12.5" width="6" height="4" fill="url(#bx)" stroke="#000" stroke-width="1"/>
<rect x="6.5" y="18.5" width="12" height="5" fill="url(#bx)" stroke="#000" stroke-width="1"/>
<rect x="0.5" y="0.5" width="5" height="5" fill="#f6d23a" stroke="#000" stroke-width="1"/>
</g>
<g transform="translate(1142,298)">
<line x1="2" y1="0" x2="2" y2="25" stroke="#e00000" stroke-width="1.3"/>
<text x="4" y="12" font-family="Liberation Sans" font-weight="bold" font-size="12" fill="#2d4a6b">a</text><text x="2" y="22" font-family="Liberation Serif" font-style="italic" font-size="17" fill="#111">y</text>
</g>
<g transform="translate(960,335)">
<rect x="0.5" y="5.5" width="5" height="12" fill="url(#bx)" stroke="#000" stroke-width="1"/>
<rect x="6.5" y="10.5" width="5" height="7" fill="url(#bx)" stroke="#000" stroke-width="1"/>
<rect x="10.5" y="0.5" width="7" height="17" fill="url(#bx)" stroke="#000" stroke-width="1"/>
<line x1="0" y1="17.5" x2="24" y2="17.5" stroke="#e00000" stroke-width="1.3"/>
<rect x="18.5" y="17.5" width="5" height="5" fill="#f6d23a" stroke="#000" stroke-width="1"/>
</g>
<g transform="translate(996,335)">
<line x1="0" y1="1" x2="24" y2="1" stroke="#e00000" stroke-width="1.3"/>
<rect x="7.5" y="1.5" width="5" height="12" fill="url(#bx)" stroke="#000" stroke-width="1"/>
<rect x="13.5" y="1.5" width="6" height="6" fill="url(#bx)" stroke="#000" stroke-width="1"/>
<rect x="15.5" y="1.5" width="7" height="22" fill="url(#bx)" stroke="#000" stroke-width="1"/>
<path d="M2,5 L2,16" stroke="#111" stroke-width="1" fill="none"/>
<path d="M2,3 L0,6 L4,6 Z" fill="#111"/>
</g>
<g transform="translate(1032,335)">
<rect x="7.5" y="6.5" width="5" height="12" fill="url(#bx)" stroke="#000" stroke-width="1"/>
<rect x="12.5" y="9.5" width="6" height="6" fill="url(#bx)" stroke="#000" stroke-width="1"/>
<rect x="17.5" y="0.5" width="6" height="23" fill="url(#bx)" stroke="#000" stroke-width="1"/>
<line x1="0" y1="12" x2="24" y2="12" stroke="#e00000" stroke-width="1.3"/>
<path d="M2,0 L2,10 M2,14 L2,24" stroke="#111" stroke-width="1" fill="none"/>
<path d="M2,11 L0,8 L4,8 Z M2,13 L0,16 L4,16 Z" fill="#111"/>
</g>
<g transform="translate(1068,335)">
<line x1="0" y1="23" x2="24" y2="23" stroke="#e00000" stroke-width="1.3"/>
<rect x="3.5" y="13.5" width="5" height="9" fill="url(#bx)" stroke="#000" stroke-width="1"/>
<rect x="9.5" y="10.5" width="5" height="12" fill="url(#bx)" stroke="#000" stroke-width="1"/>
<rect x="15.5" y="13.5" width="5" height="9" fill="url(#bx)" stroke="#000" stroke-width="1"/>
<path d="M1,12 L1,21" stroke="#111" stroke-width="1" fill="none"/>
<path d="M1,23 L-1,20 L3,20 Z" fill="#111"/>
</g>
<g transform="translate(1104,335)">
<line x1="0" y1="6" x2="24" y2="6" stroke="#e00000" stroke-width="1.3"/>
<rect x="4.5" y="6.5" width="5" height="12" fill="url(#bx)" stroke="#000" stroke-width="1"/>
<rect x="12.5" y="6.5" width="6" height="17" fill="url(#bx)" stroke="#000" stroke-width="1"/>
<rect x="0.5" y="0.5" width="5" height="5" fill="#f6d23a" stroke="#000" stroke-width="1"/>
</g>
<g transform="translate(996,394)">
<path d="M2,1.5 L9,1.5" stroke="#111" stroke-width="1" fill="none"/>
<path d="M1.5,1.5 L4,-0.5 L4,3.5 Z M9.5,1.5 L7,-0.5 L7,3.5 Z" fill="#111"/>
<path d="M11,1.5 L18,1.5" stroke="#111" stroke-width="1" fill="none"/>
<path d="M10.5,1.5 L13,-0.5 L13,3.5 Z M18.5,1.5 L16,-0.5 L16,3.5 Z" fill="#111"/>
<rect x="0.5" y="6.5" width="5" height="17" fill="url(#bx)" stroke="#000" stroke-width="1"/>
<rect x="9.5" y="8.5" width="4" height="9" fill="url(#bx)" stroke="#000" stroke-width="1"/>
<rect x="18.5" y="7.5" width="5" height="8" fill="url(#bx)" stroke="#000" stroke-width="1"/>
<line x1="1" y1="0" x2="1" y2="8" stroke="#e00000" stroke-width="1.3"/>
<line x1="10" y1="0" x2="10" y2="8" stroke="#e00000" stroke-width="1.3"/>
<line x1="19" y1="0" x2="19" y2="7" stroke="#e00000" stroke-width="1.3"/>
</g>
<g transform="translate(1032,394)">
<path d="M4,1.5 L11,1.5" stroke="#111" stroke-width="1" fill="none"/>
<path d="M3.5,1.5 L6,-0.5 L6,3.5 Z M11.5,1.5 L9,-0.5 L9,3.5 Z" fill="#111"/>
<path d="M13,1.5 L20,1.5" stroke="#111" stroke-width="1" fill="none"/>
<path d="M12.5,1.5 L15,-0.5 L15,3.5 Z M20.5,1.5 L18,-0.5 L18,3.5 Z" fill="#111"/>
<rect x="0.5" y="7.5" width="6" height="8" fill="url(#bx)" stroke="#000" stroke-width="1"/>
<rect x="9.5" y="6.5" width="6" height="17" fill="url(#bx)" stroke="#000" stroke-width="1"/>
<rect x="18.5" y="9.5" width="5" height="8" fill="url(#bx)" stroke="#000" stroke-width="1"/>
<line x1="3.5" y1="0" x2="3.5" y2="12" stroke="#e00000" stroke-width="1.3"/>
<line x1="12.5" y1="0" x2="12.5" y2="12" stroke="#e00000" stroke-width="1.3"/>
<line x1="21" y1="0" x2="21" y2="12" stroke="#e00000" stroke-width="1.3"/>
</g>
<g transform="translate(1068,394)">
<path d="M6,1.5 L13,1.5" stroke="#111" stroke-width="1" fill="none"/>
<path d="M5.5,1.5 L8,-0.5 L8,3.5 Z M13.5,1.5 L11,-0.5 L11,3.5 Z" fill="#111"/>
<path d="M15,1.5 L22,1.5" stroke="#111" stroke-width="1" fill="none"/>
<path d="M14.5,1.5 L17,-0.5 L17,3.5 Z M22.5,1.5 L20,-0.5 L20,3.5 Z" fill="#111"/>
<rect x="0.5" y="6.5" width="5" height="17" fill="url(#bx)" stroke="#000" stroke-width="1"/>
<rect x="11.5" y="8.5" width="3" height="9" fill="url(#bx)" stroke="#000" stroke-width="1"/>
<rect x="18.5" y="7.5" width="5" height="8" fill="url(#bx)" stroke="#000" stroke-width="1"/>
<line x1="5" y1="0" x2="5" y2="7" stroke="#e00000" stroke-width="1.3"/>
<line x1="14" y1="0" x2="14" y2="9" stroke="#e00000" stroke-width="1.3"/>
<line x1="23" y1="0" x2="23" y2="8" stroke="#e00000" stroke-width="1.3"/>
</g>
<g transform="translate(1104,394)">
<path d="M4,1.5 L9,1.5" stroke="#111" stroke-width="1" fill="none"/>
<path d="M3.5,1.5 L6,-0.5 L6,3.5 Z M9.5,1.5 L7,-0.5 L7,3.5 Z" fill="#111"/>
<path d="M11,1.5 L19,1.5" stroke="#111" stroke-width="1" fill="none"/>
<path d="M10.5,1.5 L13,-0.5 L13,3.5 Z M19.5,1.5 L17,-0.5 L17,3.5 Z" fill="#111"/>
<rect x="0.5" y="6.5" width="3" height="17" fill="url(#bx)" stroke="#000" stroke-width="1"/>
<rect x="10.5" y="8.5" width="3" height="9" fill="url(#bx)" stroke="#000" stroke-width="1"/>
<rect x="20.5" y="6.5" width="3" height="17" fill="url(#bx)" stroke="#000" stroke-width="1"/>
<line x1="3" y1="0" x2="3" y2="7" stroke="#e00000" stroke-width="1.3"/>
<line x1="10" y1="0" x2="10" y2="9" stroke="#e00000" stroke-width="1.3"/>
<line x1="20" y1="0" x2="20" y2="7" stroke="#e00000" stroke-width="1.3"/>
</g>
<g transform="translate(1140,394)">
<path d="M2,1.5 L13,1.5" stroke="#111" stroke-width="1" fill="none"/>
<path d="M1.5,1.5 L4,-0.5 L4,3.5 Z M13.5,1.5 L11,-0.5 L11,3.5 Z" fill="#111"/>
<line x1="1" y1="0" x2="1" y2="24" stroke="#e00000" stroke-width="1.3"/>
<line x1="14" y1="0" x2="14" y2="24" stroke="#e00000" stroke-width="1.3"/>
<text x="1" y="18" font-family="Liberation Sans" font-weight="bold" font-size="12" fill="#2d4a6b">a</text><text x="9" y="18" font-family="Liberation Serif" font-style="italic" font-size="17" fill="#111">y</text>
</g>
<g transform="translate(996,430)">
<path d="M1.5,2 L1.5,9" stroke="#111" stroke-width="1" fill="none"/>
<path d="M1.5,1.5 L-0.5,4 L3.5,4 Z M1.5,9.5 L-0.5,7 L3.5,7 Z" fill="#111"/>
<path d="M1.5,11 L1.5,18" stroke="#111" stroke-width="1" fill="none"/>
<path d="M1.5,10.5 L-0.5,13 L3.5,13 Z M1.5,18.5 L-0.5,16 L3.5,16 Z" fill="#111"/>
<rect x="7.5" y="0.5" width="8" height="4" fill="url(#bx)" stroke="#000" stroke-width="1"/>
<rect x="8.5" y="9.5" width="8" height="3" fill="url(#bx)" stroke="#000" stroke-width="1"/>
<rect x="6.5" y="18.5" width="17" height="5" fill="url(#bx)" stroke="#000" stroke-width="1"/>
<line x1="0" y1="1" x2="8" y2="1" stroke="#e00000" stroke-width="1.3"/>
<line x1="0" y1="10" x2="9" y2="10" stroke="#e00000" stroke-width="1.3"/>
<line x1="0" y1="19" x2="7" y2="19" stroke="#e00000" stroke-width="1.3"/>
</g>
<g transform="translate(1032,430)">
<path d="M1.5,3 L1.5,10" stroke="#111" stroke-width="1" fill="none"/>
<path d="M1.5,2.5 L-0.5,5 L3.5,5 Z M1.5,10.5 L-0.5,8 L3.5,8 Z" fill="#111"/>
<path d="M1.5,12 L1.5,19" stroke="#111" stroke-width="1" fill="none"/>
<path d="M1.5,11.5 L-0.5,14 L3.5,14 Z M1.5,19.5 L-0.5,17 L3.5,17 Z" fill="#111"/>
<rect x="9.5" y="0.5" width="13" height="4" fill="url(#bx)" stroke="#000" stroke-width="1"/>
<rect x="6.5" y="8.5" width="17" height="5" fill="url(#bx)" stroke="#000" stroke-width="1"/>
<rect x="7.5" y="17.5" width="8" height="6" fill="url(#bx)" stroke="#000" stroke-width="1"/>
<line x1="0" y1="2" x2="13" y2="2" stroke="#e00000" stroke-width="1.3"/>
<line x1="0" y1="11" x2="13" y2="11" stroke="#e00000" stroke-width="1.3"/>
<line x1="0" y1="20" x2="13" y2="20" stroke="#e00000" stroke-width="1.3"/>
</g>
<g transform="translate(1068,430)">
<path d="M1.5,6 L1.5,13" stroke="#111" stroke-width="1" fill="none"/>
<path d="M1.5,5.5 L-0.5,8 L3.5,8 Z M1.5,13.5 L-0.5,11 L3.5,11 Z" fill="#111"/>
<path d="M1.5,15 L1.5,22" stroke="#111" stroke-width="1" fill="none"/>
<path d="M1.5,14.5 L-0.5,17 L3.5,17 Z M1.5,22.5 L-0.5,20 L3.5,20 Z" fill="#111"/>
<rect x="7.5" y="0.5" width="7" height="4" fill="url(#bx)" stroke="#000" stroke-width="1"/>
<rect x="8.5" y="11.5" width="8" height="3" fill="url(#bx)" stroke="#000" stroke-width="1"/>
<rect x="6.5" y="18.5" width="17" height="5" fill="url(#bx)" stroke="#000" stroke-width="1"/>
<line x1="0" y1="5" x2="7" y2="5" stroke="#e00000" stroke-width="1.3"/>
<line x1="0" y1="14" x2="9" y2="14" stroke="#e00000" stroke-width="1.3"/>
<line x1="0" y1="23" x2="7" y2="23" stroke="#e00000" stroke-width="1.3"/>
</g>
<g transform="translate(1104,430)">
<path d="M1.5,4 L1.5,9" stroke="#111" stroke-width="1" fill="none"/>
<path d="M1.5,3.5 L-0.5,6 L3.5,6 Z M1.5,9.5 L-0.5,7 L3.5,7 Z" fill="#111"/>
<path d="M1.5,11 L1.5,19" stroke="#111" stroke-width="1" fill="none"/>
<path d="M1.5,10.5 L-0.5,13 L3.5,13 Z M1.5,19.5 L-0.5,17 L3.5,17 Z" fill="#111"/>
<rect x="6.5" y="0.5" width="16" height="3" fill="url(#bx)" stroke="#000" stroke-width="1"/>
<rect x="8.5" y="9.5" width="9" height="3" fill="url(#bx)" stroke="#000" stroke-width="1"/>
<rect x="6.5" y="20.5" width="15" height="3" fill="url(#bx)" stroke="#000" stroke-width="1"/>
<line x1="0" y1="3" x2="7" y2="3" stroke="#e00000" stroke-width="1.3"/>
<line x1="0" y1="10" x2="9" y2="10" stroke="#e00000" stroke-width="1.3"/>
<line x1="0" y1="20" x2="7" y2="20" stroke="#e00000" stroke-width="1.3"/>
</g>
<g transform="translate(1140,430)">
<path d="M3,11 L3,22" stroke="#111" stroke-width="1" fill="none"/>
<path d="M3,10.5 L1,13 L5,13 Z M3,22.5 L1,20 L5,20 Z" fill="#111"/>
<line x1="0" y1="10" x2="24" y2="10" stroke="#e00000" stroke-width="1.3"/>
<line x1="0" y1="23.5" x2="24" y2="23.5" stroke="#e00000" stroke-width="1.3"/>
<text x="8" y="9" font-family="Liberation Serif" font-style="italic" font-size="16" fill="#111">y</text><text x="12" y="22" font-family="Liberation Sans" font-weight="bold" font-size="12" fill="#2d4a6b">a</text>
</g>
<g transform="translate(959,489)">
<path d="M2,13 L6,5 L11,6 L13,13 L8,17 L4,18 Z M13,13 L20,7 M13,13 L20,19" fill="none" stroke="#6b6bd6" stroke-width="0.8"/>
<circle cx="2" cy="13" r="1.5" fill="#c8c8ff" stroke="#6b6bd6" stroke-width="0.8"/>
<circle cx="6" cy="5" r="1.5" fill="#c8c8ff" stroke="#6b6bd6" stroke-width="0.8"/>
<circle cx="11" cy="6" r="1.5" fill="#c8c8ff" stroke="#6b6bd6" stroke-width="0.8"/>
<circle cx="13" cy="13" r="1.5" fill="#c8c8ff" stroke="#6b6bd6" stroke-width="0.8"/>
<circle cx="8" cy="17" r="1.5" fill="#c8c8ff" stroke="#6b6bd6" stroke-width="0.8"/>
<circle cx="4" cy="18" r="1.5" fill="#c8c8ff" stroke="#6b6bd6" stroke-width="0.8"/>
<circle cx="20" cy="7" r="1.5" fill="#c8c8ff" stroke="#6b6bd6" stroke-width="0.8"/>
<circle cx="20" cy="19" r="1.5" fill="#c8c8ff" stroke="#6b6bd6" stroke-width="0.8"/>
</g>
<g transform="translate(996,489)">
<rect x="0.5" y="2.5" width="8" height="8" fill="url(#bx)" stroke="#000" stroke-width="1"/>
<rect x="12.5" y="12.5" width="9" height="10" fill="url(#bx)" stroke="#000" stroke-width="1"/>
<path d="M9,5 L14,5 C16,5 17,7 17,9 L17,11" stroke="#111" stroke-width="1.2" fill="none"/>
<path d="M12,18 L7,18 C5,18 4,16 4,14 L4,12" stroke="#111" stroke-width="1.2" fill="none"/>
<path d="M15,10 L19,10 L17,13 Z M2,13 L6,13 L4,10 Z" fill="#111"/>
</g>
<g transform="translate(1032,489)">
<rect x="0.5" y="2.5" width="8" height="8" fill="url(#bx)" stroke="#000" stroke-width="1"/>
<rect x="13.5" y="10.5" width="9" height="10" fill="url(#bx)" stroke="#000" stroke-width="1"/>
<path d="M9,5 L14,5 C16,5 18,7 18,9" stroke="#111" stroke-width="1.1" fill="none"/>
<path d="M16,9 L20,9 L18,12 Z" fill="#111"/>
<rect x="2" y="16" width="10" height="2" fill="#111"/><rect x="4" y="14" width="5" height="7" fill="none" stroke="#d40000" stroke-width="1.3"/><rect x="1" y="20" width="12" height="1.5" fill="#111"/>
</g>
<g transform="translate(1068,489)">
<rect x="0.5" y="2.5" width="8" height="8" fill="url(#bx)" stroke="#000" stroke-width="1"/>
<rect x="13.5" y="10.5" width="9" height="10" fill="url(#bx)" stroke="#000" stroke-width="1"/>
<path d="M9,5 L14,5 C16,5 18,7 18,9" stroke="#111" stroke-width="1.1" fill="none"/>
<path d="M16,9 L20,9 L18,12 Z" fill="#111"/>
<circle cx="6" cy="17" r="4.5" fill="none" stroke="#e00000" stroke-width="1.2" stroke-dasharray="1.5,1.2"/>
</g>
<g transform="translate(1104,489)">
<rect x="0.5" y="2.5" width="6" height="5" fill="#f6d23a" stroke="#000" stroke-width="1"/>
<rect x="12.5" y="0.5" width="5" height="4" fill="#f6d23a" stroke="#000" stroke-width="1"/>
<rect x="17.5" y="7.5" width="5" height="4" fill="#f6d23a" stroke="#000" stroke-width="1"/>
<rect x="9.5" y="11.5" width="5" height="4" fill="#f6d23a" stroke="#000" stroke-width="1"/>
<rect x="0.5" y="19.5" width="6" height="5" fill="#f6d23a" stroke="#000" stroke-width="1"/>
<rect x="10.5" y="17.5" width="5" height="4" fill="#f6d23a" stroke="#000" stroke-width="1"/>
</g>
<g transform="translate(1140,489)">
<line x1="6" y1="7" x2="16" y2="4" stroke="#e00000" stroke-width="1.3"/>
<line x1="6" y1="11" x2="16" y2="18" stroke="#e00000" stroke-width="1.3"/>
<line x1="19" y1="6" x2="19" y2="16" stroke="#e00000" stroke-width="1.3"/>
<rect x="0.5" y="5.5" width="7" height="6" fill="#f6d23a" stroke="#000" stroke-width="1"/>
<rect x="16.5" y="0.5" width="6" height="6" fill="#f6d23a" stroke="#000" stroke-width="1"/>
<rect x="16.5" y="15.5" width="6" height="5" fill="#f6d23a" stroke="#000" stroke-width="1"/>
</g>
<g transform="translate(1117,547)">
<rect x="0.5" y="0.5" width="5" height="7" fill="url(#bx)" stroke="#000" stroke-width="1"/>
<rect x="0.5" y="10.5" width="5" height="13" fill="url(#bx)" stroke="#000" stroke-width="1"/>
<rect x="8.5" y="0.5" width="6" height="23" fill="url(#bx)" stroke="#000" stroke-width="1"/>
<rect x="17.5" y="0.5" width="4" height="23" fill="url(#bx)" stroke="#000" stroke-width="1"/>
</g>
<rect x="972.5" y="547.5" width="56" height="23" rx="4" fill="#fff" stroke="#bdb09a"/>
<rect x="1016" y="548" width="12" height="22" fill="#ece8e0"/><rect x="1015.5" y="548" width="1" height="22" fill="#d6cdbb"/>
<rect x="1050.5" y="547.5" width="57" height="23" rx="4" fill="#fff" stroke="#bdb09a"/>
<rect x="1094" y="548" width="13" height="22" fill="#ece8e0"/><rect x="1093.5" y="548" width="1" height="22" fill="#d6cdbb"/>
<path d="M1019.5,556 L1022,552 L1024.5,556 Z M1019.5,563 L1022,567 L1024.5,563 Z M1097.5,556 L1100,552 L1102.5,556 Z M1097.5,563 L1100,567 L1102.5,563 Z" fill="#7a7a7a"/>
<g font-family="Liberation Sans"><text x="954.5" y="563.5" font-size="13" fill="#3c3c3c" letter-spacing="1.500" >H:</text><text x="976" y="563.5" font-size="13" fill="#333" letter-spacing="0.643" >0.0</text><text x="1034" y="563.5" font-size="13" fill="#3c3c3c" letter-spacing="1.599" >V:</text><text x="1054" y="563.5" font-size="13" fill="#333" letter-spacing="0.643" >0.0</text></g>
<g transform="translate(959,606)">
<path d="M0,24 C3,14 5,8 8,12 C11,16 11,24 14,22 C18,19 20,6 23,2" fill="none" stroke="#999" stroke-width="0.8"/>
<line x1="1" y1="13" x2="24" y2="13" stroke="#e00000" stroke-width="1.3"/>
<rect x="1" y="11" width="4" height="4" fill="#7fb1ff" stroke="#0000ff" stroke-width="1"/>
<rect x="8" y="11" width="4" height="4" fill="#7fb1ff" stroke="#0000ff" stroke-width="1"/>
<rect x="18" y="11" width="4" height="4" fill="#7fb1ff" stroke="#0000ff" stroke-width="1"/>
</g>
<g transform="translate(995,606)">
<path d="M0,0 C8,0 14,4 12,9 C10,14 1,14 1,19 C1,24 12,22 24,25" fill="none" stroke="#999" stroke-width="0.8"/>
<line x1="11" y1="2" x2="11" y2="25" stroke="#e00000" stroke-width="1.3"/>
<rect x="9" y="1" width="4" height="4" fill="#7fb1ff" stroke="#0000ff" stroke-width="1"/>
<rect x="9" y="8" width="4" height="4" fill="#7fb1ff" stroke="#0000ff" stroke-width="1"/>
<rect x="9" y="18" width="4" height="4" fill="#7fb1ff" stroke="#0000ff" stroke-width="1"/>
</g>
<g transform="translate(1032,606)">
<path d="M0,20 C5,12 9,18 13,16 C17,14 20,22 24,20" fill="none" stroke="#999" stroke-width="0.8"/>
<path d="M3,1.5 L10,1.5" stroke="#111" stroke-width="1" fill="none"/>
<path d="M2.5,1.5 L5,-0.5 L5,3.5 Z M10.5,1.5 L8,-0.5 L8,3.5 Z" fill="#111"/>
<path d="M12,1.5 L19,1.5" stroke="#111" stroke-width="1" fill="none"/>
<path d="M11.5,1.5 L14,-0.5 L14,3.5 Z M19.5,1.5 L17,-0.5 L17,3.5 Z" fill="#111"/>
<line x1="2" y1="0" x2="2" y2="16" stroke="#e00000" stroke-width="1.3"/>
<line x1="11" y1="0" x2="11" y2="13" stroke="#e00000" stroke-width="1.3"/>
<line x1="20" y1="0" x2="20" y2="16" stroke="#e00000" stroke-width="1.3"/>
<rect x="0" y="13" width="4" height="4" fill="#7fb1ff" stroke="#0000ff" stroke-width="1"/>
<rect x="9" y="10" width="4" height="4" fill="#7fb1ff" stroke="#0000ff" stroke-width="1"/>
<rect x="18" y="13" width="4" height="4" fill="#7fb1ff" stroke="#0000ff" stroke-width="1"/>
</g>
<g transform="translate(1072,606)">
<path d="M1,2 C10,3 12,8 8,12 C4,16 0,20 8,24" fill="none" stroke="#999" stroke-width="0.8"/>
<line x1="3" y1="3" x2="15" y2="3" stroke="#e00000" stroke-width="1.3"/>
<line x1="6" y1="10" x2="15" y2="10" stroke="#e00000" stroke-width="1.3"/>
<line x1="3" y1="20" x2="15" y2="20" stroke="#e00000" stroke-width="1.3"/>
<path d="M14.5,4 L14.5,9" stroke="#111" stroke-width="1" fill="none"/>
<path d="M14.5,3.5 L12.5,6 L16.5,6 Z M14.5,9.5 L12.5,7 L16.5,7 Z" fill="#111"/>
<path d="M14.5,11 L14.5,19" stroke="#111" stroke-width="1" fill="none"/>
<path d="M14.5,10.5 L12.5,13 L16.5,13 Z M14.5,19.5 L12.5,17 L16.5,17 Z" fill="#111"/>
<rect x="1" y="1" width="4" height="4" fill="#7fb1ff" stroke="#0000ff" stroke-width="1"/>
<rect x="4" y="8" width="4" height="4" fill="#7fb1ff" stroke="#0000ff" stroke-width="1"/>
<rect x="1" y="18" width="4" height="4" fill="#7fb1ff" stroke="#0000ff" stroke-width="1"/>
</g>
</svg>
<svg class="a" style="left:0;top:0" width="1280" height="1000" viewBox="0 0 1280 1000">
<rect x="0" y="955" width="1268" height="18" fill="#e2d9c6"/>
<rect x="0" y="956" width="46" height="16" fill="#fff"/>
<path d="M0,957 L46,971 M46,957 L0,971" stroke="#7a0f0f" stroke-width="2"/>
<rect x="46" y="956" width="45" height="16" fill="#fce94f"/>
<rect x="91" y="956" width="45" height="16" fill="#edd400"/>
<rect x="136" y="956" width="45" height="16" fill="#c4a000"/>
<rect x="181" y="956" width="45" height="16" fill="#8ae234"/>
<rect x="226" y="956" width="45" height="16" fill="#73d216"/>
<rect x="271" y="956" width="45" height="16" fill="#4e9a06"/>
<rect x="316" y="956" width="45" height="16" fill="#fcaf3e"/>
<rect x="361" y="956" width="45" height="16" fill="#f57900"/>
<rect x="406" y="956" width="45" height="16" fill="#ce5c00"/>
<rect x="451" y="956" width="45" height="16" fill="#729fcf"/>
<rect x="496" y="956" width="45" height="16" fill="#3465a4"/>
<rect x="541" y="956" width="45" height="16" fill="#204a87"/>
<rect x="586" y="956" width="45" height="16" fill="#ad7fa8"/>
<rect x="631" y="956" width="45" height="16" fill="#75507b"/>
<rect x="676" y="956" width="45" height="16" fill="#5c3566"/>
<rect x="721" y="956" width="45" height="16" fill="#e9b96e"/>
<rect x="766" y="956" width="45" height="16" fill="#c17d11"/>
<rect x="811" y="956" width="45" height="16" fill="#8f5902"/>
<rect x="856" y="956" width="45" height="16" fill="#ef2929"/>
<rect x="901" y="956" width="45" height="16" fill="#cc0000"/>
<rect x="946" y="956" width="45" height="16" fill="#a40000"/>
<rect x="991" y="956" width="46" height="16" fill="#eeeeec"/>
<rect x="1037" y="956" width="46" height="16" fill="#d3d7cf"/>
<rect x="1083" y="956" width="46" height="16" fill="#babdb6"/>
<rect x="1129" y="956" width="46" height="16" fill="#888a85"/>
<rect x="1175" y="956" width="46" height="16" fill="#555753"/>
<rect x="1221" y="956" width="46" height="16" fill="#2e3436"/>
<path d="M1272,964 L1279,960 L1279,968 Z" fill="#6e6a63"/>
<defs>
<linearGradient id="trh" x1="0" y1="0" x2="0" y2="1"><stop offset="0" stop-color="#e2dacb"/><stop offset="1" stop-color="#fdfcfa"/></linearGradient>
<linearGradient id="slh" x1="0" y1="0" x2="0" y2="1"><stop offset="0" stop-color="#fdfcfb"/><stop offset="1" stop-color="#e2d9c9"/></linearGradient>
<linearGradient id="trv" x1="0" y1="0" x2="1" y2="0"><stop offset="0" stop-color="#e2dacb"/><stop offset="1" stop-color="#fdfcfa"/></linearGradient>
<linearGradient id="slv" x1="0" y1="0" x2="1" y2="0"><stop offset="0" stop-color="#fdfcfb"/><stop offset="1" stop-color="#e2d9c9"/></linearGradient>
<linearGradient id="trs" x1="0" y1="0" x2="0" y2="1"><stop offset="0" stop-color="#bfb196"/><stop offset="1" stop-color="#f6f3ee"/></linearGradient>
<linearGradient id="trsv" x1="0" y1="0" x2="1" y2="0"><stop offset="0" stop-color="#bfb196"/><stop offset="1" stop-color="#f6f3ee"/></linearGradient>
<linearGradient id="btn2" x1="0" y1="0" x2="0" y2="1"><stop offset="0" stop-color="#cfc6b6"/><stop offset="1" stop-color="#ab9d86"/></linearGradient>
</defs>
<rect x="57" y="935" width="1155" height="2" fill="#f4f1ec"/>
<rect x="77.5" y="937.5" width="1116" height="15" rx="7.5" fill="url(#trh)" stroke="url(#trs)" stroke-width="1"/>
<rect x="453.5" y="937.5" width="279" height="15" rx="7.5" fill="url(#slh)" stroke="#b5a68b" stroke-width="1"/>
<g fill="#8a8478"><rect x="590" y="941" width="1" height="7"/><rect x="592" y="941" width="1" height="7"/><rect x="594" y="941" width="1" height="7"/></g>
<path d="M65,945.5 L70.5,942.5 L70.5,948.5 Z" fill="#5a5650"/>
<path d="M1200,941.5 L1205.5,944.5 L1200,947.5 Z" fill="#5a5650"/>
<path d="M1216,942 L1221,938 L1227,947 L1219,950 Z" fill="#d8d4cc" stroke="#c8c3b8" stroke-width="0.5"/>
<rect x="1212" y="114" width="2" height="821" fill="#f4f1ec"/>
<path d="M1219.5,131 L1222.5,125.5 L1225.5,131 Z" fill="#5a5650"/>
<rect x="1214.5" y="138.5" width="15" height="776" rx="7.5" fill="url(#trv)" stroke="url(#trsv)" stroke-width="1"/>
<rect x="1214.5" y="395.5" width="15" height="98" rx="7.5" fill="url(#slv)" stroke="#b5a68b" stroke-width="1"/>
<g fill="#8a8478"><rect x="1219" y="440" width="7" height="1"/><rect x="1219" y="442" width="7" height="1"/><rect x="1219" y="444" width="7" height="1"/></g>
<path d="M1219.5,922 L1225.5,922 L1222.5,927.5 Z" fill="#5a5650"/>
<circle cx="1220" cy="106" r="4.3" fill="none" stroke="#333" stroke-width="1.4"/><path d="M1223,109 L1227,113" stroke="#333" stroke-width="2"/><text x="1218.3" y="108.8" font-family="Liberation Sans" font-size="6.5" font-weight="bold" fill="#333">1</text>
<rect x="1238" y="97" width="1" height="858" fill="#d6ccb8"/>
<g font-family="Liberation Sans">
<text x="2" y="983" font-size="11.5" fill="#3c3c3c" letter-spacing="1.223" >Fill:</text>
<text x="43" y="983" font-size="12" fill="#333" letter-spacing="0.000" font-weight="bold" >m</text>
<text x="75" y="983" font-size="12" fill="#3c3c3c" letter-spacing="0.079" font-style="italic">None</text>
<text x="2" y="996" font-size="11.5" fill="#3c3c3c" letter-spacing="0.224" >Stroke:</text>
<text x="43" y="996" font-size="12" fill="#333" letter-spacing="0.000" font-weight="bold" >m</text>
<rect x="57" y="986" width="55" height="14" fill="#000"/>
<text x="115" y="996" font-size="12" fill="#3c3c3c" letter-spacing="0.000" >3</text>
<text x="126" y="990.5" font-size="13" fill="#3c3c3c" letter-spacing="-0.862" >O:</text>
<rect x="141.5" y="976" width="35.5" height="20.5" rx="3.5" fill="#fff" stroke="#c2b6a0"/>
<rect x="164.5" y="976.5" width="12" height="19.5" fill="#ece8e0"/>
<path d="M167.5,984 L170.5,979.5 L173.5,984 Z M167.5,988 L170.5,992.5 L173.5,988 Z" fill="#8a8a8a"/>
<svg x="144" y="976" width="18" height="20" overflow="hidden"><text x="2" y="14.5" font-size="13" fill="#333" letter-spacing="-0.229" >100</text></svg>
<rect x="181" y="975" width="1" height="22" fill="#ddd5c5"/>
<path d="M187,989 C190,984.5 196,984.5 199,989 C196,993 190,993 187,989 Z" fill="#fff" stroke="#111" stroke-width="1.3"/><circle cx="193" cy="989" r="2.3" fill="#111"/><path d="M188,985 L189.5,986.5 M192,983.5 L192.5,985.5 M196,983.5 L195.5,985.5 M198.5,985 L197,986.5" stroke="#111" stroke-width="1"/>
<path d="M210,986 L210,984 C210,981 215,981 215,983.5" fill="none" stroke="#222" stroke-width="1.2"/><rect x="209.5" y="986.5" width="8" height="6" fill="#f5dc5c" stroke="#222" stroke-width="1"/><rect x="213" y="988.5" width="1.2" height="2" fill="#222"/>
<rect x="225.5" y="974.5" width="89" height="23" rx="4" fill="url(#btn2)" stroke="#a0927a"/>
<rect x="292" y="975" width="1" height="22" fill="#9a8c74"/>
<path d="M299,983.5 L306,983.5 L302.5,990 Z" fill="#6a6458"/>
<text x="232" y="990.5" font-size="13.5" fill="#3a3a3a" letter-spacing="-0.126" font-weight="bold" >•Layer 1</text>
<text x="321" y="991" font-size="14" fill="#3a3a3a" letter-spacing="1.279" font-weight="bold" >Alt</text>
<text x="343.5" y="991" font-size="14" fill="#3a3a3a" letter-spacing="0.341" >: click to select under; drag to move selected or select by touch</text>
<rect x="1125" y="975" width="1" height="25" fill="#ddd5c5"/>
<text x="1128" y="982" font-size="12" fill="#3c3c3c" letter-spacing="-0.169" >X:</text>
<text x="1128" y="995" font-size="12" fill="#3c3c3c" letter-spacing="0.162" >Y:</text>
</g><g font-family="Liberation Mono">
<text x="1147" y="982" font-size="10" fill="#3a3a3a" letter-spacing="0.000" >441.00</text>
<text x="1147" y="995" font-size="10" fill="#3a3a3a" letter-spacing="0.000" >956.00</text>
</g><g font-family="Liberation Sans">
<text x="1191" y="989" font-size="13" fill="#3c3c3c" letter-spacing="-0.276" >Z:</text>
<rect x="1205" y="977" width="46" height="17" fill="#fff"/>
<text x="1210" y="989" font-size="13" fill="#333" letter-spacing="-0.562" >200%</text>
<rect x="1250.5" y="976.5" width="9" height="18" rx="3" fill="#ece8e0" stroke="#bdb09a"/>
<path d="M1252.5,984 L1255,979.5 L1257.5,984 Z M1252.5,987 L1255,991.5 L1257.5,987 Z" fill="#555"/>
</g>
<g fill="#d3cbbb"><rect x="1276" y="996" width="1" height="1"/><rect x="1273" y="996" width="1" height="1"/><rect x="1276" y="993" width="1" height="1"/><rect x="1270" y="996" width="1" height="1"/><rect x="1273" y="993" width="1" height="1"/><rect x="1276" y="990" width="1" height="1"/></g>
</svg>
<svg class="a" style="left:0;top:0" width="1280" height="1000" viewBox="0 0 1280 1000">
<rect x="1060" y="324" width="163" height="26.5" rx="4.5" fill="#000"/>
<g font-family="Liberation Sans">
<text x="1067.5" y="341.5" font-size="14" fill="#f2f2f2" letter-spacing="0.4">Center on vertical axis</text>
</g>
<path d="M1051.5,314.5 L1051.5,331 L1055.5,327.2 L1058.6,334 L1061.2,332.8 L1058.2,326.2 L1063.5,326.2 Z" fill="#fff" stroke="#000" stroke-width="1" stroke-linejoin="round"/>
</svg>

</body></html>
